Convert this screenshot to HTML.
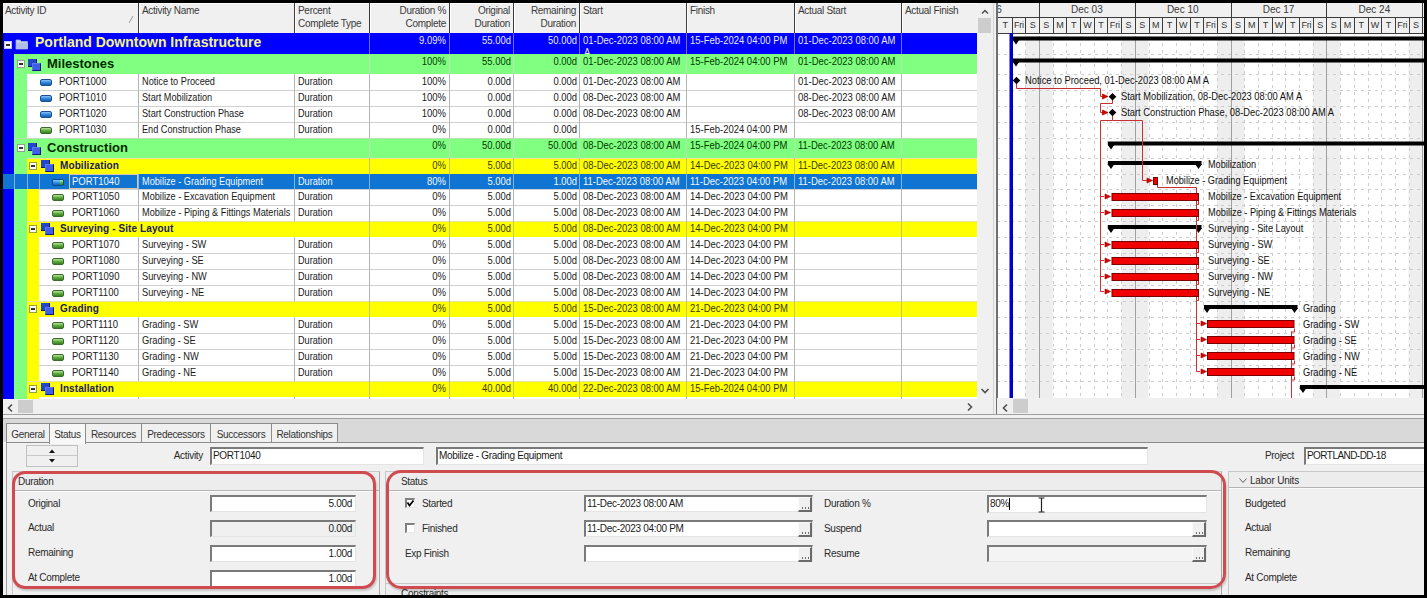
<!DOCTYPE html>
<html><head><meta charset="utf-8"><title>P6</title>
<style>
html,body{margin:0;padding:0;}
body{width:1427px;height:598px;overflow:hidden;position:relative;background:#000;font-family:"Liberation Sans",sans-serif;}
.a{position:absolute;}
.t{position:absolute;white-space:nowrap;}
svg{display:block;}
</style></head><body>
<div class="a" style="left:0;top:0;width:1427px;height:598px;overflow:hidden">
<div class="a" style="left:3px;top:3px;width:974px;height:30px;background:#f0f0f0;"></div>
<div class="a" style="left:3px;top:3px;width:974px;height:1px;background:#ffffff;"></div>
<div class="a" style="left:138px;top:3px;width:1px;height:30px;background:#3c3c3c;"></div>
<div class="a" style="left:139px;top:3px;width:1px;height:30px;background:#ffffff;"></div>
<div class="a" style="left:294px;top:3px;width:1px;height:30px;background:#3c3c3c;"></div>
<div class="a" style="left:295px;top:3px;width:1px;height:30px;background:#ffffff;"></div>
<div class="a" style="left:369px;top:3px;width:1px;height:30px;background:#3c3c3c;"></div>
<div class="a" style="left:370px;top:3px;width:1px;height:30px;background:#ffffff;"></div>
<div class="a" style="left:449px;top:3px;width:1px;height:30px;background:#3c3c3c;"></div>
<div class="a" style="left:450px;top:3px;width:1px;height:30px;background:#ffffff;"></div>
<div class="a" style="left:513px;top:3px;width:1px;height:30px;background:#3c3c3c;"></div>
<div class="a" style="left:514px;top:3px;width:1px;height:30px;background:#ffffff;"></div>
<div class="a" style="left:579px;top:3px;width:1px;height:30px;background:#3c3c3c;"></div>
<div class="a" style="left:580px;top:3px;width:1px;height:30px;background:#ffffff;"></div>
<div class="a" style="left:686px;top:3px;width:1px;height:30px;background:#3c3c3c;"></div>
<div class="a" style="left:687px;top:3px;width:1px;height:30px;background:#ffffff;"></div>
<div class="a" style="left:794px;top:3px;width:1px;height:30px;background:#3c3c3c;"></div>
<div class="a" style="left:795px;top:3px;width:1px;height:30px;background:#ffffff;"></div>
<div class="a" style="left:901px;top:3px;width:1px;height:30px;background:#3c3c3c;"></div>
<div class="a" style="left:902px;top:3px;width:1px;height:30px;background:#ffffff;"></div>
<div class="t" style="left:5px;top:4.54px;font-size:10px;line-height:12px;font-weight:400;color:#3a3a3a;letter-spacing:-0.3px;">Activity ID</div>
<div class="t" style="left:142px;top:4.54px;font-size:10px;line-height:12px;font-weight:400;color:#3a3a3a;letter-spacing:-0.3px;">Activity Name</div>
<div class="t" style="left:298px;top:4.54px;font-size:10px;line-height:12px;font-weight:400;color:#3a3a3a;letter-spacing:-0.3px;">Percent</div>
<div class="t" style="left:298px;top:17.54px;font-size:10px;line-height:12px;font-weight:400;color:#3a3a3a;letter-spacing:-0.3px;">Complete Type</div>
<div class="t" style="left:46px;width:400px;text-align:right;top:4.54px;font-size:10px;line-height:12px;font-weight:400;color:#3a3a3a;letter-spacing:-0.3px;">Duration %</div>
<div class="t" style="left:46px;width:400px;text-align:right;top:17.54px;font-size:10px;line-height:12px;font-weight:400;color:#3a3a3a;letter-spacing:-0.3px;">Complete</div>
<div class="t" style="left:110px;width:400px;text-align:right;top:4.54px;font-size:10px;line-height:12px;font-weight:400;color:#3a3a3a;letter-spacing:-0.3px;">Original</div>
<div class="t" style="left:110px;width:400px;text-align:right;top:17.54px;font-size:10px;line-height:12px;font-weight:400;color:#3a3a3a;letter-spacing:-0.3px;">Duration</div>
<div class="t" style="left:176px;width:400px;text-align:right;top:4.54px;font-size:10px;line-height:12px;font-weight:400;color:#3a3a3a;letter-spacing:-0.3px;">Remaining</div>
<div class="t" style="left:176px;width:400px;text-align:right;top:17.54px;font-size:10px;line-height:12px;font-weight:400;color:#3a3a3a;letter-spacing:-0.3px;">Duration</div>
<div class="t" style="left:583px;top:4.54px;font-size:10px;line-height:12px;font-weight:400;color:#3a3a3a;letter-spacing:-0.3px;">Start</div>
<div class="t" style="left:690px;top:4.54px;font-size:10px;line-height:12px;font-weight:400;color:#3a3a3a;letter-spacing:-0.3px;">Finish</div>
<div class="t" style="left:798px;top:4.54px;font-size:10px;line-height:12px;font-weight:400;color:#3a3a3a;letter-spacing:-0.3px;">Actual Start</div>
<div class="t" style="left:905px;top:4.54px;font-size:10px;line-height:12px;font-weight:400;color:#3a3a3a;letter-spacing:-0.3px;">Actual Finish</div>
<svg class="a" style="left:126px;top:13px" width="10" height="12"><line x1="3" y1="10" x2="7" y2="3" stroke="#9a9a9a" stroke-width="1"/></svg>
<div class="a" style="left:3px;top:33px;width:974px;height:21px;background:#0000ff;"></div>
<div class="a" style="left:369px;top:33px;width:1px;height:21px;background:#6f6fff;"></div>
<div class="a" style="left:449px;top:33px;width:1px;height:21px;background:#6f6fff;"></div>
<div class="a" style="left:513px;top:33px;width:1px;height:21px;background:#6f6fff;"></div>
<div class="a" style="left:579px;top:33px;width:1px;height:21px;background:#6f6fff;"></div>
<div class="a" style="left:686px;top:33px;width:1px;height:21px;background:#6f6fff;"></div>
<div class="a" style="left:794px;top:33px;width:1px;height:21px;background:#6f6fff;"></div>
<div class="a" style="left:901px;top:33px;width:1px;height:21px;background:#6f6fff;"></div>
<div class="a" style="left:4px;top:41px;width:6px;height:6px;background:#fff;border:1px solid #c0c0ff"><div class="a" style="left:1px;top:2px;width:4px;height:2px;background:#333"></div></div>
<svg class="a" style="left:15px;top:38px" width="14" height="12"><path d="M1 2 h4 l1.5 1.5 h6 v7.5 h-11.5 z" fill="#c4d0ee" stroke="#9aaad0" stroke-width="0.8"/><path d="M1 5 h12 v6 h-12z" fill="#b0bee6"/></svg>
<div class="t" style="left:35px;top:34.25px;font-size:14px;line-height:17px;font-weight:700;color:#f4f48a;letter-spacing:0px;">Portland Downtown Infrastructure</div>
<div class="t" style="left:46px;width:400px;text-align:right;top:33.69px;font-size:11px;line-height:13px;font-weight:400;color:#e8e8ff;letter-spacing:0px;transform:scaleX(0.865);transform-origin:100% 0;">9.09%</div>
<div class="t" style="left:111px;width:400px;text-align:right;top:33.69px;font-size:11px;line-height:13px;font-weight:400;color:#e8e8ff;letter-spacing:0px;transform:scaleX(0.8583);transform-origin:100% 0;">55.00d</div>
<div class="t" style="left:177px;width:400px;text-align:right;top:33.69px;font-size:11px;line-height:13px;font-weight:400;color:#e8e8ff;letter-spacing:0px;transform:scaleX(0.8583);transform-origin:100% 0;">50.00d</div>
<div class="t" style="left:583px;top:33.69px;font-size:11px;line-height:13px;font-weight:400;color:#e8e8ff;letter-spacing:0px;transform:scaleX(0.861);transform-origin:0 0;">01-Dec-2023 08:00 AM</div>
<div class="t" style="left:690px;top:33.69px;font-size:11px;line-height:13px;font-weight:400;color:#e8e8ff;letter-spacing:0px;transform:scaleX(0.861);transform-origin:0 0;">15-Feb-2024 04:00 PM</div>
<div class="t" style="left:798px;top:33.69px;font-size:11px;line-height:13px;font-weight:400;color:#e8e8ff;letter-spacing:0px;transform:scaleX(0.861);transform-origin:0 0;">01-Dec-2023 08:00 AM</div>
<div class="t" style="left:584px;top:45.69px;font-size:11px;line-height:13px;font-weight:400;color:#e8e8ff;letter-spacing:0px;transform:scaleX(0.865);transform-origin:0 0;">A</div>
<div class="a" style="left:3px;top:54px;width:11px;height:20px;background:#0000ff;"></div>
<div class="a" style="left:14px;top:54px;width:963px;height:20px;background:#80ff80;"></div>
<div class="a" style="left:369px;top:54px;width:1px;height:20px;background:#b4e4b4;"></div>
<div class="a" style="left:449px;top:54px;width:1px;height:20px;background:#b4e4b4;"></div>
<div class="a" style="left:513px;top:54px;width:1px;height:20px;background:#b4e4b4;"></div>
<div class="a" style="left:579px;top:54px;width:1px;height:20px;background:#b4e4b4;"></div>
<div class="a" style="left:686px;top:54px;width:1px;height:20px;background:#b4e4b4;"></div>
<div class="a" style="left:794px;top:54px;width:1px;height:20px;background:#b4e4b4;"></div>
<div class="a" style="left:901px;top:54px;width:1px;height:20px;background:#b4e4b4;"></div>
<div class="a" style="left:17px;top:60px;width:6px;height:6px;background:#fff;border:1px solid #9a9a9a"><div class="a" style="left:1px;top:2px;width:4px;height:2px;background:#333"></div></div>
<div class="a" style="left:28px;top:59px;width:9px;height:8px;background:#2546c8;border-right:1px solid #0a1a70;border-bottom:1px solid #0a1a70;box-sizing:border-box"></div>
<div class="a" style="left:32px;top:63px;width:9px;height:8px;background:#3f5fe8;border:1px solid #0a1a70;border-top-color:#5a7af0;border-left-color:#5a7af0;box-sizing:border-box"></div>
<div class="t" style="left:47px;top:55.5px;font-size:13px;line-height:16px;font-weight:700;color:#002a00;letter-spacing:0px;">Milestones</div>
<div class="t" style="left:46px;width:400px;text-align:right;top:54.69px;font-size:11px;line-height:13px;font-weight:400;color:#003a00;letter-spacing:0px;transform:scaleX(0.865);transform-origin:100% 0;">100%</div>
<div class="t" style="left:111px;width:400px;text-align:right;top:54.69px;font-size:11px;line-height:13px;font-weight:400;color:#003a00;letter-spacing:0px;transform:scaleX(0.8583);transform-origin:100% 0;">55.00d</div>
<div class="t" style="left:177px;width:400px;text-align:right;top:54.69px;font-size:11px;line-height:13px;font-weight:400;color:#003a00;letter-spacing:0px;transform:scaleX(0.857);transform-origin:100% 0;">0.00d</div>
<div class="t" style="left:583px;top:54.69px;font-size:11px;line-height:13px;font-weight:400;color:#003a00;letter-spacing:0px;transform:scaleX(0.861);transform-origin:0 0;">01-Dec-2023 08:00 AM</div>
<div class="t" style="left:690px;top:54.69px;font-size:11px;line-height:13px;font-weight:400;color:#003a00;letter-spacing:0px;transform:scaleX(0.861);transform-origin:0 0;">15-Feb-2024 04:00 PM</div>
<div class="t" style="left:798px;top:54.69px;font-size:11px;line-height:13px;font-weight:400;color:#003a00;letter-spacing:0px;transform:scaleX(0.861);transform-origin:0 0;">01-Dec-2023 08:00 AM</div>
<div class="a" style="left:3px;top:74px;width:11px;height:16px;background:#0000ff;"></div>
<div class="a" style="left:14px;top:74px;width:13px;height:16px;background:#80ff80;"></div>
<div class="a" style="left:27px;top:74px;width:950px;height:16px;background:#fff;"></div>
<div class="a" style="left:138px;top:74px;width:1px;height:16px;background:#b4b4b4;"></div>
<div class="a" style="left:294px;top:74px;width:1px;height:16px;background:#b4b4b4;"></div>
<div class="a" style="left:369px;top:74px;width:1px;height:16px;background:#b4b4b4;"></div>
<div class="a" style="left:449px;top:74px;width:1px;height:16px;background:#b4b4b4;"></div>
<div class="a" style="left:513px;top:74px;width:1px;height:16px;background:#b4b4b4;"></div>
<div class="a" style="left:579px;top:74px;width:1px;height:16px;background:#b4b4b4;"></div>
<div class="a" style="left:686px;top:74px;width:1px;height:16px;background:#b4b4b4;"></div>
<div class="a" style="left:794px;top:74px;width:1px;height:16px;background:#b4b4b4;"></div>
<div class="a" style="left:901px;top:74px;width:1px;height:16px;background:#b4b4b4;"></div>
<div class="a" style="left:40px;top:79px;width:12px;height:7px;border-radius:2px;background:linear-gradient(#8cc4f4,#2a82d8 55%,#1560b0);border:1px solid #1a4f90;box-sizing:border-box"></div>
<div class="t" style="left:59px;top:74.69px;font-size:11px;line-height:13px;font-weight:400;color:#1a1a1a;letter-spacing:0px;transform:scaleX(0.865);transform-origin:0 0;">PORT1000</div>
<div class="t" style="left:142px;top:74.69px;font-size:11px;line-height:13px;font-weight:400;color:#1a1a1a;letter-spacing:0px;transform:scaleX(0.8344);transform-origin:0 0;">Notice to Proceed</div>
<div class="t" style="left:298px;top:74.69px;font-size:11px;line-height:13px;font-weight:400;color:#1a1a1a;letter-spacing:0px;transform:scaleX(0.83);transform-origin:0 0;">Duration</div>
<div class="t" style="left:46px;width:400px;text-align:right;top:74.69px;font-size:11px;line-height:13px;font-weight:400;color:#1a1a1a;letter-spacing:0px;transform:scaleX(0.865);transform-origin:100% 0;">100%</div>
<div class="t" style="left:111px;width:400px;text-align:right;top:74.69px;font-size:11px;line-height:13px;font-weight:400;color:#1a1a1a;letter-spacing:0px;transform:scaleX(0.857);transform-origin:100% 0;">0.00d</div>
<div class="t" style="left:177px;width:400px;text-align:right;top:74.69px;font-size:11px;line-height:13px;font-weight:400;color:#1a1a1a;letter-spacing:0px;transform:scaleX(0.857);transform-origin:100% 0;">0.00d</div>
<div class="t" style="left:583px;top:74.69px;font-size:11px;line-height:13px;font-weight:400;color:#1a1a1a;letter-spacing:0px;transform:scaleX(0.861);transform-origin:0 0;">01-Dec-2023 08:00 AM</div>
<div class="t" style="left:690px;top:74.69px;font-size:11px;line-height:13px;font-weight:400;color:#1a1a1a;letter-spacing:0px;transform:scaleX(0.86);transform-origin:0 0;"></div>
<div class="t" style="left:798px;top:74.69px;font-size:11px;line-height:13px;font-weight:400;color:#1a1a1a;letter-spacing:0px;transform:scaleX(0.861);transform-origin:0 0;">01-Dec-2023 08:00 AM</div>
<div class="a" style="left:3px;top:90px;width:11px;height:16px;background:#0000ff;"></div>
<div class="a" style="left:14px;top:90px;width:13px;height:16px;background:#80ff80;"></div>
<div class="a" style="left:27px;top:90px;width:950px;height:16px;background:#fff;"></div>
<div class="a" style="left:27px;top:90px;width:950px;height:1px;background:#d0d0d0;"></div>
<div class="a" style="left:138px;top:90px;width:1px;height:16px;background:#b4b4b4;"></div>
<div class="a" style="left:294px;top:90px;width:1px;height:16px;background:#b4b4b4;"></div>
<div class="a" style="left:369px;top:90px;width:1px;height:16px;background:#b4b4b4;"></div>
<div class="a" style="left:449px;top:90px;width:1px;height:16px;background:#b4b4b4;"></div>
<div class="a" style="left:513px;top:90px;width:1px;height:16px;background:#b4b4b4;"></div>
<div class="a" style="left:579px;top:90px;width:1px;height:16px;background:#b4b4b4;"></div>
<div class="a" style="left:686px;top:90px;width:1px;height:16px;background:#b4b4b4;"></div>
<div class="a" style="left:794px;top:90px;width:1px;height:16px;background:#b4b4b4;"></div>
<div class="a" style="left:901px;top:90px;width:1px;height:16px;background:#b4b4b4;"></div>
<div class="a" style="left:40px;top:95px;width:12px;height:7px;border-radius:2px;background:linear-gradient(#8cc4f4,#2a82d8 55%,#1560b0);border:1px solid #1a4f90;box-sizing:border-box"></div>
<div class="t" style="left:59px;top:90.69px;font-size:11px;line-height:13px;font-weight:400;color:#1a1a1a;letter-spacing:0px;transform:scaleX(0.865);transform-origin:0 0;">PORT1010</div>
<div class="t" style="left:142px;top:90.69px;font-size:11px;line-height:13px;font-weight:400;color:#1a1a1a;letter-spacing:0px;transform:scaleX(0.8317);transform-origin:0 0;">Start Mobilization</div>
<div class="t" style="left:298px;top:90.69px;font-size:11px;line-height:13px;font-weight:400;color:#1a1a1a;letter-spacing:0px;transform:scaleX(0.83);transform-origin:0 0;">Duration</div>
<div class="t" style="left:46px;width:400px;text-align:right;top:90.69px;font-size:11px;line-height:13px;font-weight:400;color:#1a1a1a;letter-spacing:0px;transform:scaleX(0.865);transform-origin:100% 0;">100%</div>
<div class="t" style="left:111px;width:400px;text-align:right;top:90.69px;font-size:11px;line-height:13px;font-weight:400;color:#1a1a1a;letter-spacing:0px;transform:scaleX(0.857);transform-origin:100% 0;">0.00d</div>
<div class="t" style="left:177px;width:400px;text-align:right;top:90.69px;font-size:11px;line-height:13px;font-weight:400;color:#1a1a1a;letter-spacing:0px;transform:scaleX(0.857);transform-origin:100% 0;">0.00d</div>
<div class="t" style="left:583px;top:90.69px;font-size:11px;line-height:13px;font-weight:400;color:#1a1a1a;letter-spacing:0px;transform:scaleX(0.861);transform-origin:0 0;">08-Dec-2023 08:00 AM</div>
<div class="t" style="left:690px;top:90.69px;font-size:11px;line-height:13px;font-weight:400;color:#1a1a1a;letter-spacing:0px;transform:scaleX(0.86);transform-origin:0 0;"></div>
<div class="t" style="left:798px;top:90.69px;font-size:11px;line-height:13px;font-weight:400;color:#1a1a1a;letter-spacing:0px;transform:scaleX(0.861);transform-origin:0 0;">08-Dec-2023 08:00 AM</div>
<div class="a" style="left:3px;top:106px;width:11px;height:16px;background:#0000ff;"></div>
<div class="a" style="left:14px;top:106px;width:13px;height:16px;background:#80ff80;"></div>
<div class="a" style="left:27px;top:106px;width:950px;height:16px;background:#fff;"></div>
<div class="a" style="left:27px;top:106px;width:950px;height:1px;background:#d0d0d0;"></div>
<div class="a" style="left:138px;top:106px;width:1px;height:16px;background:#b4b4b4;"></div>
<div class="a" style="left:294px;top:106px;width:1px;height:16px;background:#b4b4b4;"></div>
<div class="a" style="left:369px;top:106px;width:1px;height:16px;background:#b4b4b4;"></div>
<div class="a" style="left:449px;top:106px;width:1px;height:16px;background:#b4b4b4;"></div>
<div class="a" style="left:513px;top:106px;width:1px;height:16px;background:#b4b4b4;"></div>
<div class="a" style="left:579px;top:106px;width:1px;height:16px;background:#b4b4b4;"></div>
<div class="a" style="left:686px;top:106px;width:1px;height:16px;background:#b4b4b4;"></div>
<div class="a" style="left:794px;top:106px;width:1px;height:16px;background:#b4b4b4;"></div>
<div class="a" style="left:901px;top:106px;width:1px;height:16px;background:#b4b4b4;"></div>
<div class="a" style="left:40px;top:111px;width:12px;height:7px;border-radius:2px;background:linear-gradient(#8cc4f4,#2a82d8 55%,#1560b0);border:1px solid #1a4f90;box-sizing:border-box"></div>
<div class="t" style="left:59px;top:106.69px;font-size:11px;line-height:13px;font-weight:400;color:#1a1a1a;letter-spacing:0px;transform:scaleX(0.865);transform-origin:0 0;">PORT1020</div>
<div class="t" style="left:142px;top:106.69px;font-size:11px;line-height:13px;font-weight:400;color:#1a1a1a;letter-spacing:0px;transform:scaleX(0.8333);transform-origin:0 0;">Start Construction Phase</div>
<div class="t" style="left:298px;top:106.69px;font-size:11px;line-height:13px;font-weight:400;color:#1a1a1a;letter-spacing:0px;transform:scaleX(0.83);transform-origin:0 0;">Duration</div>
<div class="t" style="left:46px;width:400px;text-align:right;top:106.69px;font-size:11px;line-height:13px;font-weight:400;color:#1a1a1a;letter-spacing:0px;transform:scaleX(0.865);transform-origin:100% 0;">100%</div>
<div class="t" style="left:111px;width:400px;text-align:right;top:106.69px;font-size:11px;line-height:13px;font-weight:400;color:#1a1a1a;letter-spacing:0px;transform:scaleX(0.857);transform-origin:100% 0;">0.00d</div>
<div class="t" style="left:177px;width:400px;text-align:right;top:106.69px;font-size:11px;line-height:13px;font-weight:400;color:#1a1a1a;letter-spacing:0px;transform:scaleX(0.857);transform-origin:100% 0;">0.00d</div>
<div class="t" style="left:583px;top:106.69px;font-size:11px;line-height:13px;font-weight:400;color:#1a1a1a;letter-spacing:0px;transform:scaleX(0.861);transform-origin:0 0;">08-Dec-2023 08:00 AM</div>
<div class="t" style="left:690px;top:106.69px;font-size:11px;line-height:13px;font-weight:400;color:#1a1a1a;letter-spacing:0px;transform:scaleX(0.86);transform-origin:0 0;"></div>
<div class="t" style="left:798px;top:106.69px;font-size:11px;line-height:13px;font-weight:400;color:#1a1a1a;letter-spacing:0px;transform:scaleX(0.861);transform-origin:0 0;">08-Dec-2023 08:00 AM</div>
<div class="a" style="left:3px;top:122px;width:11px;height:16px;background:#0000ff;"></div>
<div class="a" style="left:14px;top:122px;width:13px;height:16px;background:#80ff80;"></div>
<div class="a" style="left:27px;top:122px;width:950px;height:16px;background:#fff;"></div>
<div class="a" style="left:27px;top:122px;width:950px;height:1px;background:#d0d0d0;"></div>
<div class="a" style="left:138px;top:122px;width:1px;height:16px;background:#b4b4b4;"></div>
<div class="a" style="left:294px;top:122px;width:1px;height:16px;background:#b4b4b4;"></div>
<div class="a" style="left:369px;top:122px;width:1px;height:16px;background:#b4b4b4;"></div>
<div class="a" style="left:449px;top:122px;width:1px;height:16px;background:#b4b4b4;"></div>
<div class="a" style="left:513px;top:122px;width:1px;height:16px;background:#b4b4b4;"></div>
<div class="a" style="left:579px;top:122px;width:1px;height:16px;background:#b4b4b4;"></div>
<div class="a" style="left:686px;top:122px;width:1px;height:16px;background:#b4b4b4;"></div>
<div class="a" style="left:794px;top:122px;width:1px;height:16px;background:#b4b4b4;"></div>
<div class="a" style="left:901px;top:122px;width:1px;height:16px;background:#b4b4b4;"></div>
<div class="a" style="left:40px;top:127px;width:12px;height:7px;border-radius:2px;background:linear-gradient(#b8e0a0,#5aa83a 55%,#3a8020);border:1px solid #3a6a2a;box-sizing:border-box"></div>
<div class="t" style="left:59px;top:122.69px;font-size:11px;line-height:13px;font-weight:400;color:#1a1a1a;letter-spacing:0px;transform:scaleX(0.865);transform-origin:0 0;">PORT1030</div>
<div class="t" style="left:142px;top:122.69px;font-size:11px;line-height:13px;font-weight:400;color:#1a1a1a;letter-spacing:0px;transform:scaleX(0.8341);transform-origin:0 0;">End Construction Phase</div>
<div class="t" style="left:298px;top:122.69px;font-size:11px;line-height:13px;font-weight:400;color:#1a1a1a;letter-spacing:0px;transform:scaleX(0.83);transform-origin:0 0;">Duration</div>
<div class="t" style="left:46px;width:400px;text-align:right;top:122.69px;font-size:11px;line-height:13px;font-weight:400;color:#1a1a1a;letter-spacing:0px;transform:scaleX(0.865);transform-origin:100% 0;">0%</div>
<div class="t" style="left:111px;width:400px;text-align:right;top:122.69px;font-size:11px;line-height:13px;font-weight:400;color:#1a1a1a;letter-spacing:0px;transform:scaleX(0.857);transform-origin:100% 0;">0.00d</div>
<div class="t" style="left:177px;width:400px;text-align:right;top:122.69px;font-size:11px;line-height:13px;font-weight:400;color:#1a1a1a;letter-spacing:0px;transform:scaleX(0.857);transform-origin:100% 0;">0.00d</div>
<div class="t" style="left:583px;top:122.69px;font-size:11px;line-height:13px;font-weight:400;color:#1a1a1a;letter-spacing:0px;transform:scaleX(0.86);transform-origin:0 0;"></div>
<div class="t" style="left:690px;top:122.69px;font-size:11px;line-height:13px;font-weight:400;color:#1a1a1a;letter-spacing:0px;transform:scaleX(0.861);transform-origin:0 0;">15-Feb-2024 04:00 PM</div>
<div class="t" style="left:798px;top:122.69px;font-size:11px;line-height:13px;font-weight:400;color:#1a1a1a;letter-spacing:0px;transform:scaleX(0.86);transform-origin:0 0;"></div>
<div class="a" style="left:3px;top:138px;width:11px;height:20px;background:#0000ff;"></div>
<div class="a" style="left:14px;top:138px;width:963px;height:20px;background:#80ff80;"></div>
<div class="a" style="left:14px;top:138px;width:963px;height:1px;background:#bce0bc;"></div>
<div class="a" style="left:369px;top:138px;width:1px;height:20px;background:#b4e4b4;"></div>
<div class="a" style="left:449px;top:138px;width:1px;height:20px;background:#b4e4b4;"></div>
<div class="a" style="left:513px;top:138px;width:1px;height:20px;background:#b4e4b4;"></div>
<div class="a" style="left:579px;top:138px;width:1px;height:20px;background:#b4e4b4;"></div>
<div class="a" style="left:686px;top:138px;width:1px;height:20px;background:#b4e4b4;"></div>
<div class="a" style="left:794px;top:138px;width:1px;height:20px;background:#b4e4b4;"></div>
<div class="a" style="left:901px;top:138px;width:1px;height:20px;background:#b4e4b4;"></div>
<div class="a" style="left:17px;top:144px;width:6px;height:6px;background:#fff;border:1px solid #9a9a9a"><div class="a" style="left:1px;top:2px;width:4px;height:2px;background:#333"></div></div>
<div class="a" style="left:28px;top:143px;width:9px;height:8px;background:#2546c8;border-right:1px solid #0a1a70;border-bottom:1px solid #0a1a70;box-sizing:border-box"></div>
<div class="a" style="left:32px;top:147px;width:9px;height:8px;background:#3f5fe8;border:1px solid #0a1a70;border-top-color:#5a7af0;border-left-color:#5a7af0;box-sizing:border-box"></div>
<div class="t" style="left:47px;top:139.5px;font-size:13px;line-height:16px;font-weight:700;color:#002a00;letter-spacing:0px;">Construction</div>
<div class="t" style="left:46px;width:400px;text-align:right;top:138.69px;font-size:11px;line-height:13px;font-weight:400;color:#003a00;letter-spacing:0px;transform:scaleX(0.865);transform-origin:100% 0;">0%</div>
<div class="t" style="left:111px;width:400px;text-align:right;top:138.69px;font-size:11px;line-height:13px;font-weight:400;color:#003a00;letter-spacing:0px;transform:scaleX(0.8583);transform-origin:100% 0;">50.00d</div>
<div class="t" style="left:177px;width:400px;text-align:right;top:138.69px;font-size:11px;line-height:13px;font-weight:400;color:#003a00;letter-spacing:0px;transform:scaleX(0.8583);transform-origin:100% 0;">50.00d</div>
<div class="t" style="left:583px;top:138.69px;font-size:11px;line-height:13px;font-weight:400;color:#003a00;letter-spacing:0px;transform:scaleX(0.861);transform-origin:0 0;">08-Dec-2023 08:00 AM</div>
<div class="t" style="left:690px;top:138.69px;font-size:11px;line-height:13px;font-weight:400;color:#003a00;letter-spacing:0px;transform:scaleX(0.861);transform-origin:0 0;">15-Feb-2024 04:00 PM</div>
<div class="t" style="left:798px;top:138.69px;font-size:11px;line-height:13px;font-weight:400;color:#003a00;letter-spacing:0px;transform:scaleX(0.861);transform-origin:0 0;">11-Dec-2023 08:00 AM</div>
<div class="a" style="left:3px;top:158px;width:11px;height:16px;background:#0000ff;"></div>
<div class="a" style="left:14px;top:158px;width:13px;height:16px;background:#80ff80;"></div>
<div class="a" style="left:27px;top:158px;width:950px;height:16px;background:#ffff00;"></div>
<div class="a" style="left:27px;top:158px;width:950px;height:1px;background:#e4e4a0;"></div>
<div class="a" style="left:369px;top:158px;width:1px;height:16px;background:#c8c860;"></div>
<div class="a" style="left:449px;top:158px;width:1px;height:16px;background:#c8c860;"></div>
<div class="a" style="left:513px;top:158px;width:1px;height:16px;background:#c8c860;"></div>
<div class="a" style="left:579px;top:158px;width:1px;height:16px;background:#c8c860;"></div>
<div class="a" style="left:686px;top:158px;width:1px;height:16px;background:#c8c860;"></div>
<div class="a" style="left:794px;top:158px;width:1px;height:16px;background:#c8c860;"></div>
<div class="a" style="left:901px;top:158px;width:1px;height:16px;background:#c8c860;"></div>
<div class="a" style="left:29px;top:162px;width:6px;height:6px;background:#fff;border:1px solid #a0a040"><div class="a" style="left:1px;top:2px;width:4px;height:2px;background:#333"></div></div>
<div class="a" style="left:41px;top:160px;width:9px;height:8px;background:#2546c8;border-right:1px solid #0a1a70;border-bottom:1px solid #0a1a70;box-sizing:border-box"></div>
<div class="a" style="left:45px;top:164px;width:9px;height:8px;background:#3f5fe8;border:1px solid #0a1a70;border-top-color:#5a7af0;border-left-color:#5a7af0;box-sizing:border-box"></div>
<div class="t" style="left:60px;top:160.23px;font-size:10px;line-height:12px;font-weight:700;color:#20205a;letter-spacing:0.1px;">Mobilization</div>
<div class="t" style="left:46px;width:400px;text-align:right;top:158.69px;font-size:11px;line-height:13px;font-weight:400;color:#3a3a00;letter-spacing:0px;transform:scaleX(0.865);transform-origin:100% 0;">0%</div>
<div class="t" style="left:111px;width:400px;text-align:right;top:158.69px;font-size:11px;line-height:13px;font-weight:400;color:#3a3a00;letter-spacing:0px;transform:scaleX(0.857);transform-origin:100% 0;">5.00d</div>
<div class="t" style="left:177px;width:400px;text-align:right;top:158.69px;font-size:11px;line-height:13px;font-weight:400;color:#3a3a00;letter-spacing:0px;transform:scaleX(0.857);transform-origin:100% 0;">5.00d</div>
<div class="t" style="left:583px;top:158.69px;font-size:11px;line-height:13px;font-weight:400;color:#3a3a00;letter-spacing:0px;transform:scaleX(0.861);transform-origin:0 0;">08-Dec-2023 08:00 AM</div>
<div class="t" style="left:690px;top:158.69px;font-size:11px;line-height:13px;font-weight:400;color:#3a3a00;letter-spacing:0px;transform:scaleX(0.861);transform-origin:0 0;">14-Dec-2023 04:00 PM</div>
<div class="t" style="left:798px;top:158.69px;font-size:11px;line-height:13px;font-weight:400;color:#3a3a00;letter-spacing:0px;transform:scaleX(0.861);transform-origin:0 0;">11-Dec-2023 08:00 AM</div>
<div class="a" style="left:3px;top:174px;width:974px;height:15px;background:#0f74d2;"></div>
<div class="a" style="left:14px;top:174px;width:1px;height:15px;background:#7ab6ec;"></div>
<div class="a" style="left:27px;top:174px;width:1px;height:15px;background:#7ab6ec;"></div>
<div class="a" style="left:39px;top:174px;width:1px;height:15px;background:#7ab6ec;"></div>
<div class="a" style="left:69px;top:174px;width:1px;height:15px;background:#7ab6ec;"></div>
<div class="a" style="left:138px;top:174px;width:1px;height:15px;background:#7ab6ec;"></div>
<div class="a" style="left:294px;top:174px;width:1px;height:15px;background:#7ab6ec;"></div>
<div class="a" style="left:369px;top:174px;width:1px;height:15px;background:#7ab6ec;"></div>
<div class="a" style="left:449px;top:174px;width:1px;height:15px;background:#7ab6ec;"></div>
<div class="a" style="left:513px;top:174px;width:1px;height:15px;background:#7ab6ec;"></div>
<div class="a" style="left:579px;top:174px;width:1px;height:15px;background:#7ab6ec;"></div>
<div class="a" style="left:686px;top:174px;width:1px;height:15px;background:#7ab6ec;"></div>
<div class="a" style="left:794px;top:174px;width:1px;height:15px;background:#7ab6ec;"></div>
<div class="a" style="left:901px;top:174px;width:1px;height:15px;background:#7ab6ec;"></div>
<div class="a" style="left:69px;top:174px;width:69px;height:15px;box-sizing:border-box;border:1px solid #d8c8b0"></div>
<div class="a" style="left:52px;top:179px;width:12px;height:7px;border-radius:2px;background:linear-gradient(#0a4a8a,#0a4a8a);box-sizing:border-box;overflow:hidden"><div class="a" style="left:1px;top:1px;width:7px;height:5px;background:linear-gradient(#7cc8ff,#2a88e0 60%,#1a5cb0)"></div><div class="a" style="left:8px;top:1px;width:3px;height:5px;background:linear-gradient(#a8f0a0,#50b040 60%,#2a7a20)"></div></div>
<div class="t" style="left:72px;top:174.69px;font-size:11px;line-height:13px;font-weight:400;color:#f0f8ff;letter-spacing:0px;transform:scaleX(0.865);transform-origin:0 0;">PORT1040</div>
<div class="t" style="left:142px;top:174.69px;font-size:11px;line-height:13px;font-weight:400;color:#f0f8ff;letter-spacing:0px;transform:scaleX(0.835);transform-origin:0 0;">Mobilize - Grading Equipment</div>
<div class="t" style="left:298px;top:174.69px;font-size:11px;line-height:13px;font-weight:400;color:#f0f8ff;letter-spacing:0px;transform:scaleX(0.83);transform-origin:0 0;">Duration</div>
<div class="t" style="left:46px;width:400px;text-align:right;top:174.69px;font-size:11px;line-height:13px;font-weight:400;color:#f0f8ff;letter-spacing:0px;transform:scaleX(0.865);transform-origin:100% 0;">80%</div>
<div class="t" style="left:111px;width:400px;text-align:right;top:174.69px;font-size:11px;line-height:13px;font-weight:400;color:#f0f8ff;letter-spacing:0px;transform:scaleX(0.857);transform-origin:100% 0;">5.00d</div>
<div class="t" style="left:177px;width:400px;text-align:right;top:174.69px;font-size:11px;line-height:13px;font-weight:400;color:#f0f8ff;letter-spacing:0px;transform:scaleX(0.857);transform-origin:100% 0;">1.00d</div>
<div class="t" style="left:583px;top:174.69px;font-size:11px;line-height:13px;font-weight:400;color:#f0f8ff;letter-spacing:0px;transform:scaleX(0.861);transform-origin:0 0;">11-Dec-2023 08:00 AM</div>
<div class="t" style="left:690px;top:174.69px;font-size:11px;line-height:13px;font-weight:400;color:#f0f8ff;letter-spacing:0px;transform:scaleX(0.861);transform-origin:0 0;">11-Dec-2023 04:00 PM</div>
<div class="t" style="left:798px;top:174.69px;font-size:11px;line-height:13px;font-weight:400;color:#f0f8ff;letter-spacing:0px;transform:scaleX(0.861);transform-origin:0 0;">11-Dec-2023 08:00 AM</div>
<div class="a" style="left:3px;top:189px;width:11px;height:16px;background:#0000ff;"></div>
<div class="a" style="left:14px;top:189px;width:13px;height:16px;background:#80ff80;"></div>
<div class="a" style="left:27px;top:189px;width:12px;height:16px;background:#ffff00;"></div>
<div class="a" style="left:39px;top:189px;width:938px;height:16px;background:#fff;"></div>
<div class="a" style="left:39px;top:189px;width:938px;height:1px;background:#d0d0d0;"></div>
<div class="a" style="left:138px;top:189px;width:1px;height:16px;background:#b4b4b4;"></div>
<div class="a" style="left:294px;top:189px;width:1px;height:16px;background:#b4b4b4;"></div>
<div class="a" style="left:369px;top:189px;width:1px;height:16px;background:#b4b4b4;"></div>
<div class="a" style="left:449px;top:189px;width:1px;height:16px;background:#b4b4b4;"></div>
<div class="a" style="left:513px;top:189px;width:1px;height:16px;background:#b4b4b4;"></div>
<div class="a" style="left:579px;top:189px;width:1px;height:16px;background:#b4b4b4;"></div>
<div class="a" style="left:686px;top:189px;width:1px;height:16px;background:#b4b4b4;"></div>
<div class="a" style="left:794px;top:189px;width:1px;height:16px;background:#b4b4b4;"></div>
<div class="a" style="left:901px;top:189px;width:1px;height:16px;background:#b4b4b4;"></div>
<div class="a" style="left:52px;top:194px;width:12px;height:7px;border-radius:2px;background:linear-gradient(#b8e0a0,#5aa83a 55%,#3a8020);border:1px solid #3a6a2a;box-sizing:border-box"></div>
<div class="t" style="left:72px;top:189.69px;font-size:11px;line-height:13px;font-weight:400;color:#1a1a1a;letter-spacing:0px;transform:scaleX(0.865);transform-origin:0 0;">PORT1050</div>
<div class="t" style="left:142px;top:189.69px;font-size:11px;line-height:13px;font-weight:400;color:#1a1a1a;letter-spacing:0px;transform:scaleX(0.834);transform-origin:0 0;">Mobilize - Excavation Equipment</div>
<div class="t" style="left:298px;top:189.69px;font-size:11px;line-height:13px;font-weight:400;color:#1a1a1a;letter-spacing:0px;transform:scaleX(0.83);transform-origin:0 0;">Duration</div>
<div class="t" style="left:46px;width:400px;text-align:right;top:189.69px;font-size:11px;line-height:13px;font-weight:400;color:#1a1a1a;letter-spacing:0px;transform:scaleX(0.865);transform-origin:100% 0;">0%</div>
<div class="t" style="left:111px;width:400px;text-align:right;top:189.69px;font-size:11px;line-height:13px;font-weight:400;color:#1a1a1a;letter-spacing:0px;transform:scaleX(0.857);transform-origin:100% 0;">5.00d</div>
<div class="t" style="left:177px;width:400px;text-align:right;top:189.69px;font-size:11px;line-height:13px;font-weight:400;color:#1a1a1a;letter-spacing:0px;transform:scaleX(0.857);transform-origin:100% 0;">5.00d</div>
<div class="t" style="left:583px;top:189.69px;font-size:11px;line-height:13px;font-weight:400;color:#1a1a1a;letter-spacing:0px;transform:scaleX(0.861);transform-origin:0 0;">08-Dec-2023 08:00 AM</div>
<div class="t" style="left:690px;top:189.69px;font-size:11px;line-height:13px;font-weight:400;color:#1a1a1a;letter-spacing:0px;transform:scaleX(0.861);transform-origin:0 0;">14-Dec-2023 04:00 PM</div>
<div class="t" style="left:798px;top:189.69px;font-size:11px;line-height:13px;font-weight:400;color:#1a1a1a;letter-spacing:0px;transform:scaleX(0.86);transform-origin:0 0;"></div>
<div class="a" style="left:3px;top:205px;width:11px;height:16px;background:#0000ff;"></div>
<div class="a" style="left:14px;top:205px;width:13px;height:16px;background:#80ff80;"></div>
<div class="a" style="left:27px;top:205px;width:12px;height:16px;background:#ffff00;"></div>
<div class="a" style="left:39px;top:205px;width:938px;height:16px;background:#fff;"></div>
<div class="a" style="left:39px;top:205px;width:938px;height:1px;background:#d0d0d0;"></div>
<div class="a" style="left:138px;top:205px;width:1px;height:16px;background:#b4b4b4;"></div>
<div class="a" style="left:294px;top:205px;width:1px;height:16px;background:#b4b4b4;"></div>
<div class="a" style="left:369px;top:205px;width:1px;height:16px;background:#b4b4b4;"></div>
<div class="a" style="left:449px;top:205px;width:1px;height:16px;background:#b4b4b4;"></div>
<div class="a" style="left:513px;top:205px;width:1px;height:16px;background:#b4b4b4;"></div>
<div class="a" style="left:579px;top:205px;width:1px;height:16px;background:#b4b4b4;"></div>
<div class="a" style="left:686px;top:205px;width:1px;height:16px;background:#b4b4b4;"></div>
<div class="a" style="left:794px;top:205px;width:1px;height:16px;background:#b4b4b4;"></div>
<div class="a" style="left:901px;top:205px;width:1px;height:16px;background:#b4b4b4;"></div>
<div class="a" style="left:52px;top:210px;width:12px;height:7px;border-radius:2px;background:linear-gradient(#b8e0a0,#5aa83a 55%,#3a8020);border:1px solid #3a6a2a;box-sizing:border-box"></div>
<div class="t" style="left:72px;top:205.69px;font-size:11px;line-height:13px;font-weight:400;color:#1a1a1a;letter-spacing:0px;transform:scaleX(0.865);transform-origin:0 0;">PORT1060</div>
<div class="t" style="left:142px;top:205.69px;font-size:11px;line-height:13px;font-weight:400;color:#1a1a1a;letter-spacing:0px;transform:scaleX(0.8366);transform-origin:0 0;">Mobilize - Piping &amp; Fittings Materials</div>
<div class="t" style="left:298px;top:205.69px;font-size:11px;line-height:13px;font-weight:400;color:#1a1a1a;letter-spacing:0px;transform:scaleX(0.83);transform-origin:0 0;">Duration</div>
<div class="t" style="left:46px;width:400px;text-align:right;top:205.69px;font-size:11px;line-height:13px;font-weight:400;color:#1a1a1a;letter-spacing:0px;transform:scaleX(0.865);transform-origin:100% 0;">0%</div>
<div class="t" style="left:111px;width:400px;text-align:right;top:205.69px;font-size:11px;line-height:13px;font-weight:400;color:#1a1a1a;letter-spacing:0px;transform:scaleX(0.857);transform-origin:100% 0;">5.00d</div>
<div class="t" style="left:177px;width:400px;text-align:right;top:205.69px;font-size:11px;line-height:13px;font-weight:400;color:#1a1a1a;letter-spacing:0px;transform:scaleX(0.857);transform-origin:100% 0;">5.00d</div>
<div class="t" style="left:583px;top:205.69px;font-size:11px;line-height:13px;font-weight:400;color:#1a1a1a;letter-spacing:0px;transform:scaleX(0.861);transform-origin:0 0;">08-Dec-2023 08:00 AM</div>
<div class="t" style="left:690px;top:205.69px;font-size:11px;line-height:13px;font-weight:400;color:#1a1a1a;letter-spacing:0px;transform:scaleX(0.861);transform-origin:0 0;">14-Dec-2023 04:00 PM</div>
<div class="t" style="left:798px;top:205.69px;font-size:11px;line-height:13px;font-weight:400;color:#1a1a1a;letter-spacing:0px;transform:scaleX(0.86);transform-origin:0 0;"></div>
<div class="a" style="left:3px;top:221px;width:11px;height:16px;background:#0000ff;"></div>
<div class="a" style="left:14px;top:221px;width:13px;height:16px;background:#80ff80;"></div>
<div class="a" style="left:27px;top:221px;width:950px;height:16px;background:#ffff00;"></div>
<div class="a" style="left:27px;top:221px;width:950px;height:1px;background:#e4e4a0;"></div>
<div class="a" style="left:369px;top:221px;width:1px;height:16px;background:#c8c860;"></div>
<div class="a" style="left:449px;top:221px;width:1px;height:16px;background:#c8c860;"></div>
<div class="a" style="left:513px;top:221px;width:1px;height:16px;background:#c8c860;"></div>
<div class="a" style="left:579px;top:221px;width:1px;height:16px;background:#c8c860;"></div>
<div class="a" style="left:686px;top:221px;width:1px;height:16px;background:#c8c860;"></div>
<div class="a" style="left:794px;top:221px;width:1px;height:16px;background:#c8c860;"></div>
<div class="a" style="left:901px;top:221px;width:1px;height:16px;background:#c8c860;"></div>
<div class="a" style="left:29px;top:225px;width:6px;height:6px;background:#fff;border:1px solid #a0a040"><div class="a" style="left:1px;top:2px;width:4px;height:2px;background:#333"></div></div>
<div class="a" style="left:41px;top:223px;width:9px;height:8px;background:#2546c8;border-right:1px solid #0a1a70;border-bottom:1px solid #0a1a70;box-sizing:border-box"></div>
<div class="a" style="left:45px;top:227px;width:9px;height:8px;background:#3f5fe8;border:1px solid #0a1a70;border-top-color:#5a7af0;border-left-color:#5a7af0;box-sizing:border-box"></div>
<div class="t" style="left:60px;top:223.23px;font-size:10px;line-height:12px;font-weight:700;color:#20205a;letter-spacing:0.1px;">Surveying - Site Layout</div>
<div class="t" style="left:46px;width:400px;text-align:right;top:221.69px;font-size:11px;line-height:13px;font-weight:400;color:#3a3a00;letter-spacing:0px;transform:scaleX(0.865);transform-origin:100% 0;">0%</div>
<div class="t" style="left:111px;width:400px;text-align:right;top:221.69px;font-size:11px;line-height:13px;font-weight:400;color:#3a3a00;letter-spacing:0px;transform:scaleX(0.857);transform-origin:100% 0;">5.00d</div>
<div class="t" style="left:177px;width:400px;text-align:right;top:221.69px;font-size:11px;line-height:13px;font-weight:400;color:#3a3a00;letter-spacing:0px;transform:scaleX(0.857);transform-origin:100% 0;">5.00d</div>
<div class="t" style="left:583px;top:221.69px;font-size:11px;line-height:13px;font-weight:400;color:#3a3a00;letter-spacing:0px;transform:scaleX(0.861);transform-origin:0 0;">08-Dec-2023 08:00 AM</div>
<div class="t" style="left:690px;top:221.69px;font-size:11px;line-height:13px;font-weight:400;color:#3a3a00;letter-spacing:0px;transform:scaleX(0.861);transform-origin:0 0;">14-Dec-2023 04:00 PM</div>
<div class="t" style="left:798px;top:221.69px;font-size:11px;line-height:13px;font-weight:400;color:#3a3a00;letter-spacing:0px;transform:scaleX(0.86);transform-origin:0 0;"></div>
<div class="a" style="left:3px;top:237px;width:11px;height:16px;background:#0000ff;"></div>
<div class="a" style="left:14px;top:237px;width:13px;height:16px;background:#80ff80;"></div>
<div class="a" style="left:27px;top:237px;width:12px;height:16px;background:#ffff00;"></div>
<div class="a" style="left:39px;top:237px;width:938px;height:16px;background:#fff;"></div>
<div class="a" style="left:138px;top:237px;width:1px;height:16px;background:#b4b4b4;"></div>
<div class="a" style="left:294px;top:237px;width:1px;height:16px;background:#b4b4b4;"></div>
<div class="a" style="left:369px;top:237px;width:1px;height:16px;background:#b4b4b4;"></div>
<div class="a" style="left:449px;top:237px;width:1px;height:16px;background:#b4b4b4;"></div>
<div class="a" style="left:513px;top:237px;width:1px;height:16px;background:#b4b4b4;"></div>
<div class="a" style="left:579px;top:237px;width:1px;height:16px;background:#b4b4b4;"></div>
<div class="a" style="left:686px;top:237px;width:1px;height:16px;background:#b4b4b4;"></div>
<div class="a" style="left:794px;top:237px;width:1px;height:16px;background:#b4b4b4;"></div>
<div class="a" style="left:901px;top:237px;width:1px;height:16px;background:#b4b4b4;"></div>
<div class="a" style="left:52px;top:242px;width:12px;height:7px;border-radius:2px;background:linear-gradient(#b8e0a0,#5aa83a 55%,#3a8020);border:1px solid #3a6a2a;box-sizing:border-box"></div>
<div class="t" style="left:72px;top:237.69px;font-size:11px;line-height:13px;font-weight:400;color:#1a1a1a;letter-spacing:0px;transform:scaleX(0.865);transform-origin:0 0;">PORT1070</div>
<div class="t" style="left:142px;top:237.69px;font-size:11px;line-height:13px;font-weight:400;color:#1a1a1a;letter-spacing:0px;transform:scaleX(0.8421);transform-origin:0 0;">Surveying - SW</div>
<div class="t" style="left:298px;top:237.69px;font-size:11px;line-height:13px;font-weight:400;color:#1a1a1a;letter-spacing:0px;transform:scaleX(0.83);transform-origin:0 0;">Duration</div>
<div class="t" style="left:46px;width:400px;text-align:right;top:237.69px;font-size:11px;line-height:13px;font-weight:400;color:#1a1a1a;letter-spacing:0px;transform:scaleX(0.865);transform-origin:100% 0;">0%</div>
<div class="t" style="left:111px;width:400px;text-align:right;top:237.69px;font-size:11px;line-height:13px;font-weight:400;color:#1a1a1a;letter-spacing:0px;transform:scaleX(0.857);transform-origin:100% 0;">5.00d</div>
<div class="t" style="left:177px;width:400px;text-align:right;top:237.69px;font-size:11px;line-height:13px;font-weight:400;color:#1a1a1a;letter-spacing:0px;transform:scaleX(0.857);transform-origin:100% 0;">5.00d</div>
<div class="t" style="left:583px;top:237.69px;font-size:11px;line-height:13px;font-weight:400;color:#1a1a1a;letter-spacing:0px;transform:scaleX(0.861);transform-origin:0 0;">08-Dec-2023 08:00 AM</div>
<div class="t" style="left:690px;top:237.69px;font-size:11px;line-height:13px;font-weight:400;color:#1a1a1a;letter-spacing:0px;transform:scaleX(0.861);transform-origin:0 0;">14-Dec-2023 04:00 PM</div>
<div class="t" style="left:798px;top:237.69px;font-size:11px;line-height:13px;font-weight:400;color:#1a1a1a;letter-spacing:0px;transform:scaleX(0.86);transform-origin:0 0;"></div>
<div class="a" style="left:3px;top:253px;width:11px;height:16px;background:#0000ff;"></div>
<div class="a" style="left:14px;top:253px;width:13px;height:16px;background:#80ff80;"></div>
<div class="a" style="left:27px;top:253px;width:12px;height:16px;background:#ffff00;"></div>
<div class="a" style="left:39px;top:253px;width:938px;height:16px;background:#fff;"></div>
<div class="a" style="left:39px;top:253px;width:938px;height:1px;background:#d0d0d0;"></div>
<div class="a" style="left:138px;top:253px;width:1px;height:16px;background:#b4b4b4;"></div>
<div class="a" style="left:294px;top:253px;width:1px;height:16px;background:#b4b4b4;"></div>
<div class="a" style="left:369px;top:253px;width:1px;height:16px;background:#b4b4b4;"></div>
<div class="a" style="left:449px;top:253px;width:1px;height:16px;background:#b4b4b4;"></div>
<div class="a" style="left:513px;top:253px;width:1px;height:16px;background:#b4b4b4;"></div>
<div class="a" style="left:579px;top:253px;width:1px;height:16px;background:#b4b4b4;"></div>
<div class="a" style="left:686px;top:253px;width:1px;height:16px;background:#b4b4b4;"></div>
<div class="a" style="left:794px;top:253px;width:1px;height:16px;background:#b4b4b4;"></div>
<div class="a" style="left:901px;top:253px;width:1px;height:16px;background:#b4b4b4;"></div>
<div class="a" style="left:52px;top:258px;width:12px;height:7px;border-radius:2px;background:linear-gradient(#b8e0a0,#5aa83a 55%,#3a8020);border:1px solid #3a6a2a;box-sizing:border-box"></div>
<div class="t" style="left:72px;top:253.69px;font-size:11px;line-height:13px;font-weight:400;color:#1a1a1a;letter-spacing:0px;transform:scaleX(0.865);transform-origin:0 0;">PORT1080</div>
<div class="t" style="left:142px;top:253.69px;font-size:11px;line-height:13px;font-weight:400;color:#1a1a1a;letter-spacing:0px;transform:scaleX(0.8421);transform-origin:0 0;">Surveying - SE</div>
<div class="t" style="left:298px;top:253.69px;font-size:11px;line-height:13px;font-weight:400;color:#1a1a1a;letter-spacing:0px;transform:scaleX(0.83);transform-origin:0 0;">Duration</div>
<div class="t" style="left:46px;width:400px;text-align:right;top:253.69px;font-size:11px;line-height:13px;font-weight:400;color:#1a1a1a;letter-spacing:0px;transform:scaleX(0.865);transform-origin:100% 0;">0%</div>
<div class="t" style="left:111px;width:400px;text-align:right;top:253.69px;font-size:11px;line-height:13px;font-weight:400;color:#1a1a1a;letter-spacing:0px;transform:scaleX(0.857);transform-origin:100% 0;">5.00d</div>
<div class="t" style="left:177px;width:400px;text-align:right;top:253.69px;font-size:11px;line-height:13px;font-weight:400;color:#1a1a1a;letter-spacing:0px;transform:scaleX(0.857);transform-origin:100% 0;">5.00d</div>
<div class="t" style="left:583px;top:253.69px;font-size:11px;line-height:13px;font-weight:400;color:#1a1a1a;letter-spacing:0px;transform:scaleX(0.861);transform-origin:0 0;">08-Dec-2023 08:00 AM</div>
<div class="t" style="left:690px;top:253.69px;font-size:11px;line-height:13px;font-weight:400;color:#1a1a1a;letter-spacing:0px;transform:scaleX(0.861);transform-origin:0 0;">14-Dec-2023 04:00 PM</div>
<div class="t" style="left:798px;top:253.69px;font-size:11px;line-height:13px;font-weight:400;color:#1a1a1a;letter-spacing:0px;transform:scaleX(0.86);transform-origin:0 0;"></div>
<div class="a" style="left:3px;top:269px;width:11px;height:16px;background:#0000ff;"></div>
<div class="a" style="left:14px;top:269px;width:13px;height:16px;background:#80ff80;"></div>
<div class="a" style="left:27px;top:269px;width:12px;height:16px;background:#ffff00;"></div>
<div class="a" style="left:39px;top:269px;width:938px;height:16px;background:#fff;"></div>
<div class="a" style="left:39px;top:269px;width:938px;height:1px;background:#d0d0d0;"></div>
<div class="a" style="left:138px;top:269px;width:1px;height:16px;background:#b4b4b4;"></div>
<div class="a" style="left:294px;top:269px;width:1px;height:16px;background:#b4b4b4;"></div>
<div class="a" style="left:369px;top:269px;width:1px;height:16px;background:#b4b4b4;"></div>
<div class="a" style="left:449px;top:269px;width:1px;height:16px;background:#b4b4b4;"></div>
<div class="a" style="left:513px;top:269px;width:1px;height:16px;background:#b4b4b4;"></div>
<div class="a" style="left:579px;top:269px;width:1px;height:16px;background:#b4b4b4;"></div>
<div class="a" style="left:686px;top:269px;width:1px;height:16px;background:#b4b4b4;"></div>
<div class="a" style="left:794px;top:269px;width:1px;height:16px;background:#b4b4b4;"></div>
<div class="a" style="left:901px;top:269px;width:1px;height:16px;background:#b4b4b4;"></div>
<div class="a" style="left:52px;top:274px;width:12px;height:7px;border-radius:2px;background:linear-gradient(#b8e0a0,#5aa83a 55%,#3a8020);border:1px solid #3a6a2a;box-sizing:border-box"></div>
<div class="t" style="left:72px;top:269.69px;font-size:11px;line-height:13px;font-weight:400;color:#1a1a1a;letter-spacing:0px;transform:scaleX(0.865);transform-origin:0 0;">PORT1090</div>
<div class="t" style="left:142px;top:269.69px;font-size:11px;line-height:13px;font-weight:400;color:#1a1a1a;letter-spacing:0px;transform:scaleX(0.8421);transform-origin:0 0;">Surveying - NW</div>
<div class="t" style="left:298px;top:269.69px;font-size:11px;line-height:13px;font-weight:400;color:#1a1a1a;letter-spacing:0px;transform:scaleX(0.83);transform-origin:0 0;">Duration</div>
<div class="t" style="left:46px;width:400px;text-align:right;top:269.69px;font-size:11px;line-height:13px;font-weight:400;color:#1a1a1a;letter-spacing:0px;transform:scaleX(0.865);transform-origin:100% 0;">0%</div>
<div class="t" style="left:111px;width:400px;text-align:right;top:269.69px;font-size:11px;line-height:13px;font-weight:400;color:#1a1a1a;letter-spacing:0px;transform:scaleX(0.857);transform-origin:100% 0;">5.00d</div>
<div class="t" style="left:177px;width:400px;text-align:right;top:269.69px;font-size:11px;line-height:13px;font-weight:400;color:#1a1a1a;letter-spacing:0px;transform:scaleX(0.857);transform-origin:100% 0;">5.00d</div>
<div class="t" style="left:583px;top:269.69px;font-size:11px;line-height:13px;font-weight:400;color:#1a1a1a;letter-spacing:0px;transform:scaleX(0.861);transform-origin:0 0;">08-Dec-2023 08:00 AM</div>
<div class="t" style="left:690px;top:269.69px;font-size:11px;line-height:13px;font-weight:400;color:#1a1a1a;letter-spacing:0px;transform:scaleX(0.861);transform-origin:0 0;">14-Dec-2023 04:00 PM</div>
<div class="t" style="left:798px;top:269.69px;font-size:11px;line-height:13px;font-weight:400;color:#1a1a1a;letter-spacing:0px;transform:scaleX(0.86);transform-origin:0 0;"></div>
<div class="a" style="left:3px;top:285px;width:11px;height:16px;background:#0000ff;"></div>
<div class="a" style="left:14px;top:285px;width:13px;height:16px;background:#80ff80;"></div>
<div class="a" style="left:27px;top:285px;width:12px;height:16px;background:#ffff00;"></div>
<div class="a" style="left:39px;top:285px;width:938px;height:16px;background:#fff;"></div>
<div class="a" style="left:39px;top:285px;width:938px;height:1px;background:#d0d0d0;"></div>
<div class="a" style="left:138px;top:285px;width:1px;height:16px;background:#b4b4b4;"></div>
<div class="a" style="left:294px;top:285px;width:1px;height:16px;background:#b4b4b4;"></div>
<div class="a" style="left:369px;top:285px;width:1px;height:16px;background:#b4b4b4;"></div>
<div class="a" style="left:449px;top:285px;width:1px;height:16px;background:#b4b4b4;"></div>
<div class="a" style="left:513px;top:285px;width:1px;height:16px;background:#b4b4b4;"></div>
<div class="a" style="left:579px;top:285px;width:1px;height:16px;background:#b4b4b4;"></div>
<div class="a" style="left:686px;top:285px;width:1px;height:16px;background:#b4b4b4;"></div>
<div class="a" style="left:794px;top:285px;width:1px;height:16px;background:#b4b4b4;"></div>
<div class="a" style="left:901px;top:285px;width:1px;height:16px;background:#b4b4b4;"></div>
<div class="a" style="left:52px;top:290px;width:12px;height:7px;border-radius:2px;background:linear-gradient(#b8e0a0,#5aa83a 55%,#3a8020);border:1px solid #3a6a2a;box-sizing:border-box"></div>
<div class="t" style="left:72px;top:285.69px;font-size:11px;line-height:13px;font-weight:400;color:#1a1a1a;letter-spacing:0px;transform:scaleX(0.865);transform-origin:0 0;">PORT1100</div>
<div class="t" style="left:142px;top:285.69px;font-size:11px;line-height:13px;font-weight:400;color:#1a1a1a;letter-spacing:0px;transform:scaleX(0.8421);transform-origin:0 0;">Surveying - NE</div>
<div class="t" style="left:298px;top:285.69px;font-size:11px;line-height:13px;font-weight:400;color:#1a1a1a;letter-spacing:0px;transform:scaleX(0.83);transform-origin:0 0;">Duration</div>
<div class="t" style="left:46px;width:400px;text-align:right;top:285.69px;font-size:11px;line-height:13px;font-weight:400;color:#1a1a1a;letter-spacing:0px;transform:scaleX(0.865);transform-origin:100% 0;">0%</div>
<div class="t" style="left:111px;width:400px;text-align:right;top:285.69px;font-size:11px;line-height:13px;font-weight:400;color:#1a1a1a;letter-spacing:0px;transform:scaleX(0.857);transform-origin:100% 0;">5.00d</div>
<div class="t" style="left:177px;width:400px;text-align:right;top:285.69px;font-size:11px;line-height:13px;font-weight:400;color:#1a1a1a;letter-spacing:0px;transform:scaleX(0.857);transform-origin:100% 0;">5.00d</div>
<div class="t" style="left:583px;top:285.69px;font-size:11px;line-height:13px;font-weight:400;color:#1a1a1a;letter-spacing:0px;transform:scaleX(0.861);transform-origin:0 0;">08-Dec-2023 08:00 AM</div>
<div class="t" style="left:690px;top:285.69px;font-size:11px;line-height:13px;font-weight:400;color:#1a1a1a;letter-spacing:0px;transform:scaleX(0.861);transform-origin:0 0;">14-Dec-2023 04:00 PM</div>
<div class="t" style="left:798px;top:285.69px;font-size:11px;line-height:13px;font-weight:400;color:#1a1a1a;letter-spacing:0px;transform:scaleX(0.86);transform-origin:0 0;"></div>
<div class="a" style="left:3px;top:301px;width:11px;height:16px;background:#0000ff;"></div>
<div class="a" style="left:14px;top:301px;width:13px;height:16px;background:#80ff80;"></div>
<div class="a" style="left:27px;top:301px;width:950px;height:16px;background:#ffff00;"></div>
<div class="a" style="left:27px;top:301px;width:950px;height:1px;background:#e4e4a0;"></div>
<div class="a" style="left:369px;top:301px;width:1px;height:16px;background:#c8c860;"></div>
<div class="a" style="left:449px;top:301px;width:1px;height:16px;background:#c8c860;"></div>
<div class="a" style="left:513px;top:301px;width:1px;height:16px;background:#c8c860;"></div>
<div class="a" style="left:579px;top:301px;width:1px;height:16px;background:#c8c860;"></div>
<div class="a" style="left:686px;top:301px;width:1px;height:16px;background:#c8c860;"></div>
<div class="a" style="left:794px;top:301px;width:1px;height:16px;background:#c8c860;"></div>
<div class="a" style="left:901px;top:301px;width:1px;height:16px;background:#c8c860;"></div>
<div class="a" style="left:29px;top:305px;width:6px;height:6px;background:#fff;border:1px solid #a0a040"><div class="a" style="left:1px;top:2px;width:4px;height:2px;background:#333"></div></div>
<div class="a" style="left:41px;top:303px;width:9px;height:8px;background:#2546c8;border-right:1px solid #0a1a70;border-bottom:1px solid #0a1a70;box-sizing:border-box"></div>
<div class="a" style="left:45px;top:307px;width:9px;height:8px;background:#3f5fe8;border:1px solid #0a1a70;border-top-color:#5a7af0;border-left-color:#5a7af0;box-sizing:border-box"></div>
<div class="t" style="left:60px;top:303.23px;font-size:10px;line-height:12px;font-weight:700;color:#20205a;letter-spacing:0.1px;">Grading</div>
<div class="t" style="left:46px;width:400px;text-align:right;top:301.69px;font-size:11px;line-height:13px;font-weight:400;color:#3a3a00;letter-spacing:0px;transform:scaleX(0.865);transform-origin:100% 0;">0%</div>
<div class="t" style="left:111px;width:400px;text-align:right;top:301.69px;font-size:11px;line-height:13px;font-weight:400;color:#3a3a00;letter-spacing:0px;transform:scaleX(0.857);transform-origin:100% 0;">5.00d</div>
<div class="t" style="left:177px;width:400px;text-align:right;top:301.69px;font-size:11px;line-height:13px;font-weight:400;color:#3a3a00;letter-spacing:0px;transform:scaleX(0.857);transform-origin:100% 0;">5.00d</div>
<div class="t" style="left:583px;top:301.69px;font-size:11px;line-height:13px;font-weight:400;color:#3a3a00;letter-spacing:0px;transform:scaleX(0.861);transform-origin:0 0;">15-Dec-2023 08:00 AM</div>
<div class="t" style="left:690px;top:301.69px;font-size:11px;line-height:13px;font-weight:400;color:#3a3a00;letter-spacing:0px;transform:scaleX(0.861);transform-origin:0 0;">21-Dec-2023 04:00 PM</div>
<div class="t" style="left:798px;top:301.69px;font-size:11px;line-height:13px;font-weight:400;color:#3a3a00;letter-spacing:0px;transform:scaleX(0.86);transform-origin:0 0;"></div>
<div class="a" style="left:3px;top:317px;width:11px;height:16px;background:#0000ff;"></div>
<div class="a" style="left:14px;top:317px;width:13px;height:16px;background:#80ff80;"></div>
<div class="a" style="left:27px;top:317px;width:12px;height:16px;background:#ffff00;"></div>
<div class="a" style="left:39px;top:317px;width:938px;height:16px;background:#fff;"></div>
<div class="a" style="left:138px;top:317px;width:1px;height:16px;background:#b4b4b4;"></div>
<div class="a" style="left:294px;top:317px;width:1px;height:16px;background:#b4b4b4;"></div>
<div class="a" style="left:369px;top:317px;width:1px;height:16px;background:#b4b4b4;"></div>
<div class="a" style="left:449px;top:317px;width:1px;height:16px;background:#b4b4b4;"></div>
<div class="a" style="left:513px;top:317px;width:1px;height:16px;background:#b4b4b4;"></div>
<div class="a" style="left:579px;top:317px;width:1px;height:16px;background:#b4b4b4;"></div>
<div class="a" style="left:686px;top:317px;width:1px;height:16px;background:#b4b4b4;"></div>
<div class="a" style="left:794px;top:317px;width:1px;height:16px;background:#b4b4b4;"></div>
<div class="a" style="left:901px;top:317px;width:1px;height:16px;background:#b4b4b4;"></div>
<div class="a" style="left:52px;top:322px;width:12px;height:7px;border-radius:2px;background:linear-gradient(#b8e0a0,#5aa83a 55%,#3a8020);border:1px solid #3a6a2a;box-sizing:border-box"></div>
<div class="t" style="left:72px;top:317.69px;font-size:11px;line-height:13px;font-weight:400;color:#1a1a1a;letter-spacing:0px;transform:scaleX(0.865);transform-origin:0 0;">PORT1110</div>
<div class="t" style="left:142px;top:317.69px;font-size:11px;line-height:13px;font-weight:400;color:#1a1a1a;letter-spacing:0px;transform:scaleX(0.845);transform-origin:0 0;">Grading - SW</div>
<div class="t" style="left:298px;top:317.69px;font-size:11px;line-height:13px;font-weight:400;color:#1a1a1a;letter-spacing:0px;transform:scaleX(0.83);transform-origin:0 0;">Duration</div>
<div class="t" style="left:46px;width:400px;text-align:right;top:317.69px;font-size:11px;line-height:13px;font-weight:400;color:#1a1a1a;letter-spacing:0px;transform:scaleX(0.865);transform-origin:100% 0;">0%</div>
<div class="t" style="left:111px;width:400px;text-align:right;top:317.69px;font-size:11px;line-height:13px;font-weight:400;color:#1a1a1a;letter-spacing:0px;transform:scaleX(0.857);transform-origin:100% 0;">5.00d</div>
<div class="t" style="left:177px;width:400px;text-align:right;top:317.69px;font-size:11px;line-height:13px;font-weight:400;color:#1a1a1a;letter-spacing:0px;transform:scaleX(0.857);transform-origin:100% 0;">5.00d</div>
<div class="t" style="left:583px;top:317.69px;font-size:11px;line-height:13px;font-weight:400;color:#1a1a1a;letter-spacing:0px;transform:scaleX(0.861);transform-origin:0 0;">15-Dec-2023 08:00 AM</div>
<div class="t" style="left:690px;top:317.69px;font-size:11px;line-height:13px;font-weight:400;color:#1a1a1a;letter-spacing:0px;transform:scaleX(0.861);transform-origin:0 0;">21-Dec-2023 04:00 PM</div>
<div class="t" style="left:798px;top:317.69px;font-size:11px;line-height:13px;font-weight:400;color:#1a1a1a;letter-spacing:0px;transform:scaleX(0.86);transform-origin:0 0;"></div>
<div class="a" style="left:3px;top:333px;width:11px;height:16px;background:#0000ff;"></div>
<div class="a" style="left:14px;top:333px;width:13px;height:16px;background:#80ff80;"></div>
<div class="a" style="left:27px;top:333px;width:12px;height:16px;background:#ffff00;"></div>
<div class="a" style="left:39px;top:333px;width:938px;height:16px;background:#fff;"></div>
<div class="a" style="left:39px;top:333px;width:938px;height:1px;background:#d0d0d0;"></div>
<div class="a" style="left:138px;top:333px;width:1px;height:16px;background:#b4b4b4;"></div>
<div class="a" style="left:294px;top:333px;width:1px;height:16px;background:#b4b4b4;"></div>
<div class="a" style="left:369px;top:333px;width:1px;height:16px;background:#b4b4b4;"></div>
<div class="a" style="left:449px;top:333px;width:1px;height:16px;background:#b4b4b4;"></div>
<div class="a" style="left:513px;top:333px;width:1px;height:16px;background:#b4b4b4;"></div>
<div class="a" style="left:579px;top:333px;width:1px;height:16px;background:#b4b4b4;"></div>
<div class="a" style="left:686px;top:333px;width:1px;height:16px;background:#b4b4b4;"></div>
<div class="a" style="left:794px;top:333px;width:1px;height:16px;background:#b4b4b4;"></div>
<div class="a" style="left:901px;top:333px;width:1px;height:16px;background:#b4b4b4;"></div>
<div class="a" style="left:52px;top:338px;width:12px;height:7px;border-radius:2px;background:linear-gradient(#b8e0a0,#5aa83a 55%,#3a8020);border:1px solid #3a6a2a;box-sizing:border-box"></div>
<div class="t" style="left:72px;top:333.69px;font-size:11px;line-height:13px;font-weight:400;color:#1a1a1a;letter-spacing:0px;transform:scaleX(0.865);transform-origin:0 0;">PORT1120</div>
<div class="t" style="left:142px;top:333.69px;font-size:11px;line-height:13px;font-weight:400;color:#1a1a1a;letter-spacing:0px;transform:scaleX(0.845);transform-origin:0 0;">Grading - SE</div>
<div class="t" style="left:298px;top:333.69px;font-size:11px;line-height:13px;font-weight:400;color:#1a1a1a;letter-spacing:0px;transform:scaleX(0.83);transform-origin:0 0;">Duration</div>
<div class="t" style="left:46px;width:400px;text-align:right;top:333.69px;font-size:11px;line-height:13px;font-weight:400;color:#1a1a1a;letter-spacing:0px;transform:scaleX(0.865);transform-origin:100% 0;">0%</div>
<div class="t" style="left:111px;width:400px;text-align:right;top:333.69px;font-size:11px;line-height:13px;font-weight:400;color:#1a1a1a;letter-spacing:0px;transform:scaleX(0.857);transform-origin:100% 0;">5.00d</div>
<div class="t" style="left:177px;width:400px;text-align:right;top:333.69px;font-size:11px;line-height:13px;font-weight:400;color:#1a1a1a;letter-spacing:0px;transform:scaleX(0.857);transform-origin:100% 0;">5.00d</div>
<div class="t" style="left:583px;top:333.69px;font-size:11px;line-height:13px;font-weight:400;color:#1a1a1a;letter-spacing:0px;transform:scaleX(0.861);transform-origin:0 0;">15-Dec-2023 08:00 AM</div>
<div class="t" style="left:690px;top:333.69px;font-size:11px;line-height:13px;font-weight:400;color:#1a1a1a;letter-spacing:0px;transform:scaleX(0.861);transform-origin:0 0;">21-Dec-2023 04:00 PM</div>
<div class="t" style="left:798px;top:333.69px;font-size:11px;line-height:13px;font-weight:400;color:#1a1a1a;letter-spacing:0px;transform:scaleX(0.86);transform-origin:0 0;"></div>
<div class="a" style="left:3px;top:349px;width:11px;height:16px;background:#0000ff;"></div>
<div class="a" style="left:14px;top:349px;width:13px;height:16px;background:#80ff80;"></div>
<div class="a" style="left:27px;top:349px;width:12px;height:16px;background:#ffff00;"></div>
<div class="a" style="left:39px;top:349px;width:938px;height:16px;background:#fff;"></div>
<div class="a" style="left:39px;top:349px;width:938px;height:1px;background:#d0d0d0;"></div>
<div class="a" style="left:138px;top:349px;width:1px;height:16px;background:#b4b4b4;"></div>
<div class="a" style="left:294px;top:349px;width:1px;height:16px;background:#b4b4b4;"></div>
<div class="a" style="left:369px;top:349px;width:1px;height:16px;background:#b4b4b4;"></div>
<div class="a" style="left:449px;top:349px;width:1px;height:16px;background:#b4b4b4;"></div>
<div class="a" style="left:513px;top:349px;width:1px;height:16px;background:#b4b4b4;"></div>
<div class="a" style="left:579px;top:349px;width:1px;height:16px;background:#b4b4b4;"></div>
<div class="a" style="left:686px;top:349px;width:1px;height:16px;background:#b4b4b4;"></div>
<div class="a" style="left:794px;top:349px;width:1px;height:16px;background:#b4b4b4;"></div>
<div class="a" style="left:901px;top:349px;width:1px;height:16px;background:#b4b4b4;"></div>
<div class="a" style="left:52px;top:354px;width:12px;height:7px;border-radius:2px;background:linear-gradient(#b8e0a0,#5aa83a 55%,#3a8020);border:1px solid #3a6a2a;box-sizing:border-box"></div>
<div class="t" style="left:72px;top:349.69px;font-size:11px;line-height:13px;font-weight:400;color:#1a1a1a;letter-spacing:0px;transform:scaleX(0.865);transform-origin:0 0;">PORT1130</div>
<div class="t" style="left:142px;top:349.69px;font-size:11px;line-height:13px;font-weight:400;color:#1a1a1a;letter-spacing:0px;transform:scaleX(0.845);transform-origin:0 0;">Grading - NW</div>
<div class="t" style="left:298px;top:349.69px;font-size:11px;line-height:13px;font-weight:400;color:#1a1a1a;letter-spacing:0px;transform:scaleX(0.83);transform-origin:0 0;">Duration</div>
<div class="t" style="left:46px;width:400px;text-align:right;top:349.69px;font-size:11px;line-height:13px;font-weight:400;color:#1a1a1a;letter-spacing:0px;transform:scaleX(0.865);transform-origin:100% 0;">0%</div>
<div class="t" style="left:111px;width:400px;text-align:right;top:349.69px;font-size:11px;line-height:13px;font-weight:400;color:#1a1a1a;letter-spacing:0px;transform:scaleX(0.857);transform-origin:100% 0;">5.00d</div>
<div class="t" style="left:177px;width:400px;text-align:right;top:349.69px;font-size:11px;line-height:13px;font-weight:400;color:#1a1a1a;letter-spacing:0px;transform:scaleX(0.857);transform-origin:100% 0;">5.00d</div>
<div class="t" style="left:583px;top:349.69px;font-size:11px;line-height:13px;font-weight:400;color:#1a1a1a;letter-spacing:0px;transform:scaleX(0.861);transform-origin:0 0;">15-Dec-2023 08:00 AM</div>
<div class="t" style="left:690px;top:349.69px;font-size:11px;line-height:13px;font-weight:400;color:#1a1a1a;letter-spacing:0px;transform:scaleX(0.861);transform-origin:0 0;">21-Dec-2023 04:00 PM</div>
<div class="t" style="left:798px;top:349.69px;font-size:11px;line-height:13px;font-weight:400;color:#1a1a1a;letter-spacing:0px;transform:scaleX(0.86);transform-origin:0 0;"></div>
<div class="a" style="left:3px;top:365px;width:11px;height:16px;background:#0000ff;"></div>
<div class="a" style="left:14px;top:365px;width:13px;height:16px;background:#80ff80;"></div>
<div class="a" style="left:27px;top:365px;width:12px;height:16px;background:#ffff00;"></div>
<div class="a" style="left:39px;top:365px;width:938px;height:16px;background:#fff;"></div>
<div class="a" style="left:39px;top:365px;width:938px;height:1px;background:#d0d0d0;"></div>
<div class="a" style="left:138px;top:365px;width:1px;height:16px;background:#b4b4b4;"></div>
<div class="a" style="left:294px;top:365px;width:1px;height:16px;background:#b4b4b4;"></div>
<div class="a" style="left:369px;top:365px;width:1px;height:16px;background:#b4b4b4;"></div>
<div class="a" style="left:449px;top:365px;width:1px;height:16px;background:#b4b4b4;"></div>
<div class="a" style="left:513px;top:365px;width:1px;height:16px;background:#b4b4b4;"></div>
<div class="a" style="left:579px;top:365px;width:1px;height:16px;background:#b4b4b4;"></div>
<div class="a" style="left:686px;top:365px;width:1px;height:16px;background:#b4b4b4;"></div>
<div class="a" style="left:794px;top:365px;width:1px;height:16px;background:#b4b4b4;"></div>
<div class="a" style="left:901px;top:365px;width:1px;height:16px;background:#b4b4b4;"></div>
<div class="a" style="left:52px;top:370px;width:12px;height:7px;border-radius:2px;background:linear-gradient(#b8e0a0,#5aa83a 55%,#3a8020);border:1px solid #3a6a2a;box-sizing:border-box"></div>
<div class="t" style="left:72px;top:365.69px;font-size:11px;line-height:13px;font-weight:400;color:#1a1a1a;letter-spacing:0px;transform:scaleX(0.865);transform-origin:0 0;">PORT1140</div>
<div class="t" style="left:142px;top:365.69px;font-size:11px;line-height:13px;font-weight:400;color:#1a1a1a;letter-spacing:0px;transform:scaleX(0.845);transform-origin:0 0;">Grading - NE</div>
<div class="t" style="left:298px;top:365.69px;font-size:11px;line-height:13px;font-weight:400;color:#1a1a1a;letter-spacing:0px;transform:scaleX(0.83);transform-origin:0 0;">Duration</div>
<div class="t" style="left:46px;width:400px;text-align:right;top:365.69px;font-size:11px;line-height:13px;font-weight:400;color:#1a1a1a;letter-spacing:0px;transform:scaleX(0.865);transform-origin:100% 0;">0%</div>
<div class="t" style="left:111px;width:400px;text-align:right;top:365.69px;font-size:11px;line-height:13px;font-weight:400;color:#1a1a1a;letter-spacing:0px;transform:scaleX(0.857);transform-origin:100% 0;">5.00d</div>
<div class="t" style="left:177px;width:400px;text-align:right;top:365.69px;font-size:11px;line-height:13px;font-weight:400;color:#1a1a1a;letter-spacing:0px;transform:scaleX(0.857);transform-origin:100% 0;">5.00d</div>
<div class="t" style="left:583px;top:365.69px;font-size:11px;line-height:13px;font-weight:400;color:#1a1a1a;letter-spacing:0px;transform:scaleX(0.861);transform-origin:0 0;">15-Dec-2023 08:00 AM</div>
<div class="t" style="left:690px;top:365.69px;font-size:11px;line-height:13px;font-weight:400;color:#1a1a1a;letter-spacing:0px;transform:scaleX(0.861);transform-origin:0 0;">21-Dec-2023 04:00 PM</div>
<div class="t" style="left:798px;top:365.69px;font-size:11px;line-height:13px;font-weight:400;color:#1a1a1a;letter-spacing:0px;transform:scaleX(0.86);transform-origin:0 0;"></div>
<div class="a" style="left:3px;top:381px;width:11px;height:16px;background:#0000ff;"></div>
<div class="a" style="left:14px;top:381px;width:13px;height:16px;background:#80ff80;"></div>
<div class="a" style="left:27px;top:381px;width:950px;height:16px;background:#ffff00;"></div>
<div class="a" style="left:27px;top:381px;width:950px;height:1px;background:#e4e4a0;"></div>
<div class="a" style="left:369px;top:381px;width:1px;height:16px;background:#c8c860;"></div>
<div class="a" style="left:449px;top:381px;width:1px;height:16px;background:#c8c860;"></div>
<div class="a" style="left:513px;top:381px;width:1px;height:16px;background:#c8c860;"></div>
<div class="a" style="left:579px;top:381px;width:1px;height:16px;background:#c8c860;"></div>
<div class="a" style="left:686px;top:381px;width:1px;height:16px;background:#c8c860;"></div>
<div class="a" style="left:794px;top:381px;width:1px;height:16px;background:#c8c860;"></div>
<div class="a" style="left:901px;top:381px;width:1px;height:16px;background:#c8c860;"></div>
<div class="a" style="left:29px;top:385px;width:6px;height:6px;background:#fff;border:1px solid #a0a040"><div class="a" style="left:1px;top:2px;width:4px;height:2px;background:#333"></div></div>
<div class="a" style="left:41px;top:383px;width:9px;height:8px;background:#2546c8;border-right:1px solid #0a1a70;border-bottom:1px solid #0a1a70;box-sizing:border-box"></div>
<div class="a" style="left:45px;top:387px;width:9px;height:8px;background:#3f5fe8;border:1px solid #0a1a70;border-top-color:#5a7af0;border-left-color:#5a7af0;box-sizing:border-box"></div>
<div class="t" style="left:60px;top:383.23px;font-size:10px;line-height:12px;font-weight:700;color:#20205a;letter-spacing:0.1px;">Installation</div>
<div class="t" style="left:46px;width:400px;text-align:right;top:381.69px;font-size:11px;line-height:13px;font-weight:400;color:#3a3a00;letter-spacing:0px;transform:scaleX(0.865);transform-origin:100% 0;">0%</div>
<div class="t" style="left:111px;width:400px;text-align:right;top:381.69px;font-size:11px;line-height:13px;font-weight:400;color:#3a3a00;letter-spacing:0px;transform:scaleX(0.8583);transform-origin:100% 0;">40.00d</div>
<div class="t" style="left:177px;width:400px;text-align:right;top:381.69px;font-size:11px;line-height:13px;font-weight:400;color:#3a3a00;letter-spacing:0px;transform:scaleX(0.8583);transform-origin:100% 0;">40.00d</div>
<div class="t" style="left:583px;top:381.69px;font-size:11px;line-height:13px;font-weight:400;color:#3a3a00;letter-spacing:0px;transform:scaleX(0.861);transform-origin:0 0;">22-Dec-2023 08:00 AM</div>
<div class="t" style="left:690px;top:381.69px;font-size:11px;line-height:13px;font-weight:400;color:#3a3a00;letter-spacing:0px;transform:scaleX(0.861);transform-origin:0 0;">15-Feb-2024 04:00 PM</div>
<div class="t" style="left:798px;top:381.69px;font-size:11px;line-height:13px;font-weight:400;color:#3a3a00;letter-spacing:0px;transform:scaleX(0.86);transform-origin:0 0;"></div>
<div class="a" style="left:3px;top:397px;width:11px;height:2px;background:#0000ff;"></div>
<div class="a" style="left:14px;top:397px;width:13px;height:2px;background:#80ff80;"></div>
<div class="a" style="left:27px;top:397px;width:12px;height:2px;background:#ffff00;"></div>
<div class="a" style="left:39px;top:397px;width:938px;height:2px;background:#fff;"></div>
<div class="a" style="left:138px;top:397px;width:1px;height:2px;background:#b4b4b4;"></div>
<div class="a" style="left:294px;top:397px;width:1px;height:2px;background:#b4b4b4;"></div>
<div class="a" style="left:369px;top:397px;width:1px;height:2px;background:#b4b4b4;"></div>
<div class="a" style="left:449px;top:397px;width:1px;height:2px;background:#b4b4b4;"></div>
<div class="a" style="left:513px;top:397px;width:1px;height:2px;background:#b4b4b4;"></div>
<div class="a" style="left:579px;top:397px;width:1px;height:2px;background:#b4b4b4;"></div>
<div class="a" style="left:686px;top:397px;width:1px;height:2px;background:#b4b4b4;"></div>
<div class="a" style="left:794px;top:397px;width:1px;height:2px;background:#b4b4b4;"></div>
<div class="a" style="left:901px;top:397px;width:1px;height:2px;background:#b4b4b4;"></div>
<div class="a" style="left:977px;top:3px;width:15px;height:396px;background:#f0f0f0;"></div>
<svg class="a" style="left:980px;top:8px" width="10" height="8"><path d="M2 5.5 L5 2.5 L8 5.5" fill="none" stroke="#505050" stroke-width="1.5"/></svg>
<div class="a" style="left:978px;top:18px;width:13px;height:15px;background:#cdcdcd;"></div>
<svg class="a" style="left:980px;top:387px" width="10" height="8"><path d="M1.5 2 L5 5.5 L8.5 2" fill="none" stroke="#505050" stroke-width="1.6"/></svg>
<div class="a" style="left:992px;top:3px;width:5px;height:411px;background:#f0f0f0;"></div>
<div class="a" style="left:993px;top:3px;width:1px;height:411px;background:#d4d4d4;"></div>
<div class="a" style="left:996px;top:3px;width:2px;height:411px;background:#707070;"></div>
<div class="a" style="left:3px;top:399px;width:989px;height:15px;background:#f0f0f0;"></div>
<svg class="a" style="left:6px;top:403px" width="8" height="10"><path d="M6 1.5 L2.5 5 L6 8.5" fill="none" stroke="#505050" stroke-width="1.6"/></svg>
<div class="a" style="left:18px;top:400px;width:15px;height:13px;background:#cdcdcd;"></div>
<svg class="a" style="left:966px;top:402px" width="8" height="10"><path d="M2 1.5 L5.5 5 L2 8.5" fill="none" stroke="#505050" stroke-width="1.6"/></svg>
<div class="a" style="left:998px;top:3px;width:426px;height:395px;overflow:hidden"><div class="a" style="left:-998px;top:-3px;width:1427px;height:598px"><svg class="a" style="left:0;top:0" width="1427" height="598"><rect x="997" y="3" width="427" height="30" fill="#f0f0f0"/><rect x="997" y="33" width="427" height="365" fill="#ffffff"/><rect x="929.48" y="36" width="27.38" height="362" fill="#eeeeee"/><rect x="1025.31" y="36" width="27.38" height="362" fill="#eeeeee"/><rect x="1121.14" y="36" width="27.38" height="362" fill="#eeeeee"/><rect x="1216.97" y="36" width="27.38" height="362" fill="#eeeeee"/><rect x="1312.80" y="36" width="27.38" height="362" fill="#eeeeee"/><rect x="1408.63" y="36" width="27.38" height="362" fill="#eeeeee"/><line x1="997" y1="54.5" x2="1424" y2="54.5" stroke="#cdcdcd" stroke-width="1" stroke-dasharray="3 4"/><line x1="997" y1="74.5" x2="1424" y2="74.5" stroke="#cdcdcd" stroke-width="1" stroke-dasharray="3 4"/><line x1="997" y1="90.5" x2="1424" y2="90.5" stroke="#cdcdcd" stroke-width="1" stroke-dasharray="3 4"/><line x1="997" y1="106.5" x2="1424" y2="106.5" stroke="#cdcdcd" stroke-width="1" stroke-dasharray="3 4"/><line x1="997" y1="122.5" x2="1424" y2="122.5" stroke="#cdcdcd" stroke-width="1" stroke-dasharray="3 4"/><line x1="997" y1="138.5" x2="1424" y2="138.5" stroke="#cdcdcd" stroke-width="1" stroke-dasharray="3 4"/><line x1="997" y1="158.5" x2="1424" y2="158.5" stroke="#cdcdcd" stroke-width="1" stroke-dasharray="3 4"/><line x1="997" y1="174.5" x2="1424" y2="174.5" stroke="#cdcdcd" stroke-width="1" stroke-dasharray="3 4"/><line x1="997" y1="189.5" x2="1424" y2="189.5" stroke="#cdcdcd" stroke-width="1" stroke-dasharray="3 4"/><line x1="997" y1="205.5" x2="1424" y2="205.5" stroke="#cdcdcd" stroke-width="1" stroke-dasharray="3 4"/><line x1="997" y1="221.5" x2="1424" y2="221.5" stroke="#cdcdcd" stroke-width="1" stroke-dasharray="3 4"/><line x1="997" y1="237.5" x2="1424" y2="237.5" stroke="#cdcdcd" stroke-width="1" stroke-dasharray="3 4"/><line x1="997" y1="253.5" x2="1424" y2="253.5" stroke="#cdcdcd" stroke-width="1" stroke-dasharray="3 4"/><line x1="997" y1="269.5" x2="1424" y2="269.5" stroke="#cdcdcd" stroke-width="1" stroke-dasharray="3 4"/><line x1="997" y1="285.5" x2="1424" y2="285.5" stroke="#cdcdcd" stroke-width="1" stroke-dasharray="3 4"/><line x1="997" y1="301.5" x2="1424" y2="301.5" stroke="#cdcdcd" stroke-width="1" stroke-dasharray="3 4"/><line x1="997" y1="317.5" x2="1424" y2="317.5" stroke="#cdcdcd" stroke-width="1" stroke-dasharray="3 4"/><line x1="997" y1="333.5" x2="1424" y2="333.5" stroke="#cdcdcd" stroke-width="1" stroke-dasharray="3 4"/><line x1="997" y1="349.5" x2="1424" y2="349.5" stroke="#cdcdcd" stroke-width="1" stroke-dasharray="3 4"/><line x1="997" y1="365.5" x2="1424" y2="365.5" stroke="#cdcdcd" stroke-width="1" stroke-dasharray="3 4"/><line x1="997" y1="381.5" x2="1424" y2="381.5" stroke="#cdcdcd" stroke-width="1" stroke-dasharray="3 4"/><line x1="1012.5" y1="36" x2="1012.5" y2="398" stroke="#cdcdcd" stroke-width="1" stroke-dasharray="3 4"/><line x1="1025.5" y1="36" x2="1025.5" y2="398" stroke="#cdcdcd" stroke-width="1" stroke-dasharray="3 4"/><line x1="1053.5" y1="36" x2="1053.5" y2="398" stroke="#cdcdcd" stroke-width="1" stroke-dasharray="3 4"/><line x1="1066.5" y1="36" x2="1066.5" y2="398" stroke="#cdcdcd" stroke-width="1" stroke-dasharray="3 4"/><line x1="1080.5" y1="36" x2="1080.5" y2="398" stroke="#cdcdcd" stroke-width="1" stroke-dasharray="3 4"/><line x1="1094.5" y1="36" x2="1094.5" y2="398" stroke="#cdcdcd" stroke-width="1" stroke-dasharray="3 4"/><line x1="1107.5" y1="36" x2="1107.5" y2="398" stroke="#cdcdcd" stroke-width="1" stroke-dasharray="3 4"/><line x1="1121.5" y1="36" x2="1121.5" y2="398" stroke="#cdcdcd" stroke-width="1" stroke-dasharray="3 4"/><line x1="1149.5" y1="36" x2="1149.5" y2="398" stroke="#cdcdcd" stroke-width="1" stroke-dasharray="3 4"/><line x1="1162.5" y1="36" x2="1162.5" y2="398" stroke="#cdcdcd" stroke-width="1" stroke-dasharray="3 4"/><line x1="1176.5" y1="36" x2="1176.5" y2="398" stroke="#cdcdcd" stroke-width="1" stroke-dasharray="3 4"/><line x1="1190.5" y1="36" x2="1190.5" y2="398" stroke="#cdcdcd" stroke-width="1" stroke-dasharray="3 4"/><line x1="1203.5" y1="36" x2="1203.5" y2="398" stroke="#cdcdcd" stroke-width="1" stroke-dasharray="3 4"/><line x1="1217.5" y1="36" x2="1217.5" y2="398" stroke="#cdcdcd" stroke-width="1" stroke-dasharray="3 4"/><line x1="1244.5" y1="36" x2="1244.5" y2="398" stroke="#cdcdcd" stroke-width="1" stroke-dasharray="3 4"/><line x1="1258.5" y1="36" x2="1258.5" y2="398" stroke="#cdcdcd" stroke-width="1" stroke-dasharray="3 4"/><line x1="1272.5" y1="36" x2="1272.5" y2="398" stroke="#cdcdcd" stroke-width="1" stroke-dasharray="3 4"/><line x1="1285.5" y1="36" x2="1285.5" y2="398" stroke="#cdcdcd" stroke-width="1" stroke-dasharray="3 4"/><line x1="1299.5" y1="36" x2="1299.5" y2="398" stroke="#cdcdcd" stroke-width="1" stroke-dasharray="3 4"/><line x1="1313.5" y1="36" x2="1313.5" y2="398" stroke="#cdcdcd" stroke-width="1" stroke-dasharray="3 4"/><line x1="1340.5" y1="36" x2="1340.5" y2="398" stroke="#cdcdcd" stroke-width="1" stroke-dasharray="3 4"/><line x1="1354.5" y1="36" x2="1354.5" y2="398" stroke="#cdcdcd" stroke-width="1" stroke-dasharray="3 4"/><line x1="1368.5" y1="36" x2="1368.5" y2="398" stroke="#cdcdcd" stroke-width="1" stroke-dasharray="3 4"/><line x1="1381.5" y1="36" x2="1381.5" y2="398" stroke="#cdcdcd" stroke-width="1" stroke-dasharray="3 4"/><line x1="1395.5" y1="36" x2="1395.5" y2="398" stroke="#cdcdcd" stroke-width="1" stroke-dasharray="3 4"/><line x1="1409.5" y1="36" x2="1409.5" y2="398" stroke="#cdcdcd" stroke-width="1" stroke-dasharray="3 4"/><line x1="1039.5" y1="36" x2="1039.5" y2="398" stroke="#a0a0a0" stroke-width="1"/><line x1="1135.5" y1="36" x2="1135.5" y2="398" stroke="#a0a0a0" stroke-width="1"/><line x1="1231.5" y1="36" x2="1231.5" y2="398" stroke="#a0a0a0" stroke-width="1"/><line x1="1326.5" y1="36" x2="1326.5" y2="398" stroke="#a0a0a0" stroke-width="1"/><line x1="1422.5" y1="36" x2="1422.5" y2="398" stroke="#a0a0a0" stroke-width="1"/><line x1="997" y1="17.5" x2="1424" y2="17.5" stroke="#3c3c3c" stroke-width="1"/><rect x="997" y="33" width="427" height="3" fill="#fdfdfd"/><line x1="997" y1="33.5" x2="1424" y2="33.5" stroke="#3c3c3c" stroke-width="1"/><line x1="1012.5" y1="17" x2="1012.5" y2="34" stroke="#3c3c3c" stroke-width="1"/><line x1="1025.5" y1="17" x2="1025.5" y2="34" stroke="#3c3c3c" stroke-width="1"/><line x1="1039.5" y1="3" x2="1039.5" y2="34" stroke="#3c3c3c" stroke-width="1"/><line x1="1053.5" y1="17" x2="1053.5" y2="34" stroke="#3c3c3c" stroke-width="1"/><line x1="1066.5" y1="17" x2="1066.5" y2="34" stroke="#3c3c3c" stroke-width="1"/><line x1="1080.5" y1="17" x2="1080.5" y2="34" stroke="#3c3c3c" stroke-width="1"/><line x1="1094.5" y1="17" x2="1094.5" y2="34" stroke="#3c3c3c" stroke-width="1"/><line x1="1107.5" y1="17" x2="1107.5" y2="34" stroke="#3c3c3c" stroke-width="1"/><line x1="1121.5" y1="17" x2="1121.5" y2="34" stroke="#3c3c3c" stroke-width="1"/><line x1="1135.5" y1="3" x2="1135.5" y2="34" stroke="#3c3c3c" stroke-width="1"/><line x1="1149.5" y1="17" x2="1149.5" y2="34" stroke="#3c3c3c" stroke-width="1"/><line x1="1162.5" y1="17" x2="1162.5" y2="34" stroke="#3c3c3c" stroke-width="1"/><line x1="1176.5" y1="17" x2="1176.5" y2="34" stroke="#3c3c3c" stroke-width="1"/><line x1="1190.5" y1="17" x2="1190.5" y2="34" stroke="#3c3c3c" stroke-width="1"/><line x1="1203.5" y1="17" x2="1203.5" y2="34" stroke="#3c3c3c" stroke-width="1"/><line x1="1217.5" y1="17" x2="1217.5" y2="34" stroke="#3c3c3c" stroke-width="1"/><line x1="1231.5" y1="3" x2="1231.5" y2="34" stroke="#3c3c3c" stroke-width="1"/><line x1="1244.5" y1="17" x2="1244.5" y2="34" stroke="#3c3c3c" stroke-width="1"/><line x1="1258.5" y1="17" x2="1258.5" y2="34" stroke="#3c3c3c" stroke-width="1"/><line x1="1272.5" y1="17" x2="1272.5" y2="34" stroke="#3c3c3c" stroke-width="1"/><line x1="1285.5" y1="17" x2="1285.5" y2="34" stroke="#3c3c3c" stroke-width="1"/><line x1="1299.5" y1="17" x2="1299.5" y2="34" stroke="#3c3c3c" stroke-width="1"/><line x1="1313.5" y1="17" x2="1313.5" y2="34" stroke="#3c3c3c" stroke-width="1"/><line x1="1326.5" y1="3" x2="1326.5" y2="34" stroke="#3c3c3c" stroke-width="1"/><line x1="1340.5" y1="17" x2="1340.5" y2="34" stroke="#3c3c3c" stroke-width="1"/><line x1="1354.5" y1="17" x2="1354.5" y2="34" stroke="#3c3c3c" stroke-width="1"/><line x1="1368.5" y1="17" x2="1368.5" y2="34" stroke="#3c3c3c" stroke-width="1"/><line x1="1381.5" y1="17" x2="1381.5" y2="34" stroke="#3c3c3c" stroke-width="1"/><line x1="1395.5" y1="17" x2="1395.5" y2="34" stroke="#3c3c3c" stroke-width="1"/><line x1="1409.5" y1="17" x2="1409.5" y2="34" stroke="#3c3c3c" stroke-width="1"/><line x1="1422.5" y1="3" x2="1422.5" y2="34" stroke="#3c3c3c" stroke-width="1"/><rect x="1009.5" y="33" width="3.5" height="365" fill="#0000c8"/></svg>
<div class="t" style="left:791.585px;width:400px;text-align:center;top:19.88px;font-size:9px;line-height:11px;font-weight:400;color:#333333;letter-spacing:0px;">W</div>
<div class="t" style="left:805.275px;width:400px;text-align:center;top:19.88px;font-size:9px;line-height:11px;font-weight:400;color:#333333;letter-spacing:0px;">T</div>
<div class="t" style="left:818.965px;width:400px;text-align:center;top:19.88px;font-size:9px;line-height:11px;font-weight:400;color:#333333;letter-spacing:-0.2px;">Fri</div>
<div class="t" style="left:832.655px;width:400px;text-align:center;top:19.88px;font-size:9px;line-height:11px;font-weight:400;color:#333333;letter-spacing:0px;">S</div>
<div class="t" style="left:846.345px;width:400px;text-align:center;top:19.88px;font-size:9px;line-height:11px;font-weight:400;color:#333333;letter-spacing:0px;">S</div>
<div class="t" style="left:860.0350000000001px;width:400px;text-align:center;top:19.88px;font-size:9px;line-height:11px;font-weight:400;color:#333333;letter-spacing:0px;">M</div>
<div class="t" style="left:873.7250000000001px;width:400px;text-align:center;top:19.88px;font-size:9px;line-height:11px;font-weight:400;color:#333333;letter-spacing:0px;">T</div>
<div class="t" style="left:887.415px;width:400px;text-align:center;top:19.88px;font-size:9px;line-height:11px;font-weight:400;color:#333333;letter-spacing:0px;">W</div>
<div class="t" style="left:901.105px;width:400px;text-align:center;top:19.88px;font-size:9px;line-height:11px;font-weight:400;color:#333333;letter-spacing:0px;">T</div>
<div class="t" style="left:914.7950000000001px;width:400px;text-align:center;top:19.88px;font-size:9px;line-height:11px;font-weight:400;color:#333333;letter-spacing:-0.2px;">Fri</div>
<div class="t" style="left:928.4850000000001px;width:400px;text-align:center;top:19.88px;font-size:9px;line-height:11px;font-weight:400;color:#333333;letter-spacing:0px;">S</div>
<div class="t" style="left:942.175px;width:400px;text-align:center;top:19.88px;font-size:9px;line-height:11px;font-weight:400;color:#333333;letter-spacing:0px;">S</div>
<div class="t" style="left:955.865px;width:400px;text-align:center;top:19.88px;font-size:9px;line-height:11px;font-weight:400;color:#333333;letter-spacing:0px;">M</div>
<div class="t" style="left:969.5550000000001px;width:400px;text-align:center;top:19.88px;font-size:9px;line-height:11px;font-weight:400;color:#333333;letter-spacing:0px;">T</div>
<div class="t" style="left:983.2450000000001px;width:400px;text-align:center;top:19.88px;font-size:9px;line-height:11px;font-weight:400;color:#333333;letter-spacing:0px;">W</div>
<div class="t" style="left:996.935px;width:400px;text-align:center;top:19.88px;font-size:9px;line-height:11px;font-weight:400;color:#333333;letter-spacing:0px;">T</div>
<div class="t" style="left:1010.625px;width:400px;text-align:center;top:19.88px;font-size:9px;line-height:11px;font-weight:400;color:#333333;letter-spacing:-0.2px;">Fri</div>
<div class="t" style="left:1024.315px;width:400px;text-align:center;top:19.88px;font-size:9px;line-height:11px;font-weight:400;color:#333333;letter-spacing:0px;">S</div>
<div class="t" style="left:1038.005px;width:400px;text-align:center;top:19.88px;font-size:9px;line-height:11px;font-weight:400;color:#333333;letter-spacing:0px;">S</div>
<div class="t" style="left:1051.695px;width:400px;text-align:center;top:19.88px;font-size:9px;line-height:11px;font-weight:400;color:#333333;letter-spacing:0px;">M</div>
<div class="t" style="left:1065.385px;width:400px;text-align:center;top:19.88px;font-size:9px;line-height:11px;font-weight:400;color:#333333;letter-spacing:0px;">T</div>
<div class="t" style="left:1079.075px;width:400px;text-align:center;top:19.88px;font-size:9px;line-height:11px;font-weight:400;color:#333333;letter-spacing:0px;">W</div>
<div class="t" style="left:1092.765px;width:400px;text-align:center;top:19.88px;font-size:9px;line-height:11px;font-weight:400;color:#333333;letter-spacing:0px;">T</div>
<div class="t" style="left:1106.4550000000002px;width:400px;text-align:center;top:19.88px;font-size:9px;line-height:11px;font-weight:400;color:#333333;letter-spacing:-0.2px;">Fri</div>
<div class="t" style="left:1120.145px;width:400px;text-align:center;top:19.88px;font-size:9px;line-height:11px;font-weight:400;color:#333333;letter-spacing:0px;">S</div>
<div class="t" style="left:1133.835px;width:400px;text-align:center;top:19.88px;font-size:9px;line-height:11px;font-weight:400;color:#333333;letter-spacing:0px;">S</div>
<div class="t" style="left:1147.525px;width:400px;text-align:center;top:19.88px;font-size:9px;line-height:11px;font-weight:400;color:#333333;letter-spacing:0px;">M</div>
<div class="t" style="left:1161.215px;width:400px;text-align:center;top:19.88px;font-size:9px;line-height:11px;font-weight:400;color:#333333;letter-spacing:0px;">T</div>
<div class="t" style="left:1174.905px;width:400px;text-align:center;top:19.88px;font-size:9px;line-height:11px;font-weight:400;color:#333333;letter-spacing:0px;">W</div>
<div class="t" style="left:1188.595px;width:400px;text-align:center;top:19.88px;font-size:9px;line-height:11px;font-weight:400;color:#333333;letter-spacing:0px;">T</div>
<div class="t" style="left:1202.285px;width:400px;text-align:center;top:19.88px;font-size:9px;line-height:11px;font-weight:400;color:#333333;letter-spacing:-0.2px;">Fri</div>
<div class="t" style="left:1215.9750000000001px;width:400px;text-align:center;top:19.88px;font-size:9px;line-height:11px;font-weight:400;color:#333333;letter-spacing:0px;">S</div>
<div class="t" style="left:1229.665px;width:400px;text-align:center;top:19.88px;font-size:9px;line-height:11px;font-weight:400;color:#333333;letter-spacing:0px;">S</div>
<div class="t" style="left:786.0849999999999px;width:400px;text-align:center;top:4.04px;font-size:10px;line-height:12px;font-weight:400;color:#3a3a3a;letter-spacing:0px;">Nov 26</div>
<div class="t" style="left:886.915px;width:400px;text-align:center;top:4.04px;font-size:10px;line-height:12px;font-weight:400;color:#3a3a3a;letter-spacing:0px;">Dec 03</div>
<div class="t" style="left:982.7449999999999px;width:400px;text-align:center;top:4.04px;font-size:10px;line-height:12px;font-weight:400;color:#3a3a3a;letter-spacing:0px;">Dec 10</div>
<div class="t" style="left:1078.575px;width:400px;text-align:center;top:4.04px;font-size:10px;line-height:12px;font-weight:400;color:#3a3a3a;letter-spacing:0px;">Dec 17</div>
<div class="t" style="left:1174.405px;width:400px;text-align:center;top:4.04px;font-size:10px;line-height:12px;font-weight:400;color:#3a3a3a;letter-spacing:0px;">Dec 24</div>
<div class="t" style="left:1270.235px;width:400px;text-align:center;top:4.04px;font-size:10px;line-height:12px;font-weight:400;color:#3a3a3a;letter-spacing:0px;">Dec 31</div>
<svg class="a" style="left:0;top:0" width="1427" height="598"><rect x="1013" y="36.5" width="411" height="4" fill="#000"/><polygon points="1012.5,39.5 1019.5,39.5 1016,44.5" fill="#000"/><rect x="1013" y="58.5" width="411" height="4" fill="#000"/><polygon points="1012.5,61.5 1019.5,61.5 1016,66.5" fill="#000"/><rect x="1108" y="141.5" width="316" height="4" fill="#000"/><polygon points="1107.5,144.5 1114.5,144.5 1111,149.5" fill="#000"/><rect x="1108" y="161" width="93.5" height="4" fill="#000"/><polygon points="1107.5,164 1114.5,164 1111,169" fill="#000"/><polygon points="1195.0,164 1202.0,164 1198.5,169" fill="#000"/><rect x="1108" y="225" width="93.5" height="4" fill="#000"/><polygon points="1107.5,228 1114.5,228 1111,233" fill="#000"/><polygon points="1195.0,228 1202.0,228 1198.5,233" fill="#000"/><rect x="1204" y="305" width="93.5" height="4" fill="#000"/><polygon points="1203.5,308 1210.5,308 1207,313" fill="#000"/><polygon points="1291.0,308 1298.0,308 1294.5,313" fill="#000"/><rect x="1300" y="385" width="124" height="4" fill="#000"/><polygon points="1299.5,388 1306.5,388 1303,393" fill="#000"/><path d="M1016.5 84 V88.5 H1100.5 V96.5 H1104" fill="none" stroke="#c83030" stroke-width="1"/><polygon points="1102.5,94.0 1108.0,96.5 1102.5,99.0" fill="#e00000" stroke="#a00000" stroke-width="0.7"/><path d="M1112.5 100 V103.5 H1100.5 V112.5 H1104" fill="none" stroke="#c83030" stroke-width="1"/><polygon points="1102.5,110.0 1108.0,112.5 1102.5,115.0" fill="#e00000" stroke="#a00000" stroke-width="0.7"/><path d="M1112.5 116 V120.5 H1100.5 V291.5" fill="none" stroke="#c83030" stroke-width="1"/><path d="M1112.5 120.5 H1142.5 V180.5 H1148" fill="none" stroke="#c83030" stroke-width="1"/><polygon points="1147,178.0 1152.5,180.5 1147,183.0" fill="#e00000" stroke="#a00000" stroke-width="0.7"/><path d="M1100.5 196.5 H1104" fill="none" stroke="#c83030" stroke-width="1"/><polygon points="1105,194.0 1110.5,196.5 1105,199.0" fill="#e00000" stroke="#a00000" stroke-width="0.7"/><path d="M1100.5 212.5 H1104" fill="none" stroke="#c83030" stroke-width="1"/><polygon points="1105,210.0 1110.5,212.5 1105,215.0" fill="#e00000" stroke="#a00000" stroke-width="0.7"/><path d="M1100.5 244.5 H1104" fill="none" stroke="#c83030" stroke-width="1"/><polygon points="1105,242.0 1110.5,244.5 1105,247.0" fill="#e00000" stroke="#a00000" stroke-width="0.7"/><path d="M1100.5 260.5 H1104" fill="none" stroke="#c83030" stroke-width="1"/><polygon points="1105,258.0 1110.5,260.5 1105,263.0" fill="#e00000" stroke="#a00000" stroke-width="0.7"/><path d="M1100.5 276.5 H1104" fill="none" stroke="#c83030" stroke-width="1"/><polygon points="1105,274.0 1110.5,276.5 1105,279.0" fill="#e00000" stroke="#a00000" stroke-width="0.7"/><path d="M1100.5 291.5 H1104" fill="none" stroke="#c83030" stroke-width="1"/><polygon points="1105,289.0 1110.5,291.5 1105,294.0" fill="#e00000" stroke="#a00000" stroke-width="0.7"/><path d="M1157.5 184 V187.5 H1196.5 V371.5" fill="none" stroke="#c83030" stroke-width="1"/><path d="M1198.5 201 V204.5 H1196.5" fill="none" stroke="#c83030" stroke-width="1"/><path d="M1198.5 217 V220.5 H1196.5" fill="none" stroke="#c83030" stroke-width="1"/><path d="M1198.5 249 V252.5 H1196.5" fill="none" stroke="#c83030" stroke-width="1"/><path d="M1198.5 265 V268.5 H1196.5" fill="none" stroke="#c83030" stroke-width="1"/><path d="M1198.5 281 V284.5 H1196.5" fill="none" stroke="#c83030" stroke-width="1"/><path d="M1198.5 297 V300.5 H1196.5" fill="none" stroke="#c83030" stroke-width="1"/><path d="M1196.5 323.5 H1200" fill="none" stroke="#c83030" stroke-width="1"/><polygon points="1201,321.0 1206.5,323.5 1201,326.0" fill="#e00000" stroke="#a00000" stroke-width="0.7"/><path d="M1196.5 339.5 H1200" fill="none" stroke="#c83030" stroke-width="1"/><polygon points="1201,337.0 1206.5,339.5 1201,342.0" fill="#e00000" stroke="#a00000" stroke-width="0.7"/><path d="M1196.5 355.5 H1200" fill="none" stroke="#c83030" stroke-width="1"/><polygon points="1201,353.0 1206.5,355.5 1201,358.0" fill="#e00000" stroke="#a00000" stroke-width="0.7"/><path d="M1196.5 371.5 H1200" fill="none" stroke="#c83030" stroke-width="1"/><polygon points="1201,369.0 1206.5,371.5 1201,374.0" fill="#e00000" stroke="#a00000" stroke-width="0.7"/><path d="M1291.5 331.5 V398" fill="none" stroke="#c83030" stroke-width="1"/><path d="M1294.5 328.5 V332.0 H1291.5" fill="none" stroke="#c83030" stroke-width="1"/><path d="M1294.5 344.5 V348.0 H1291.5" fill="none" stroke="#c83030" stroke-width="1"/><path d="M1294.5 360.5 V364.0 H1291.5" fill="none" stroke="#c83030" stroke-width="1"/><path d="M1294.5 376.5 V380.0 H1291.5" fill="none" stroke="#c83030" stroke-width="1"/><rect x="1153.5" y="177.5" width="4" height="7" fill="#f00000" stroke="#7a0000" stroke-width="1"/><rect x="1112.0" y="193.5" width="86.5" height="7" fill="#f00000" stroke="#7a0000" stroke-width="1"/><rect x="1112.0" y="209.5" width="86.5" height="7" fill="#f00000" stroke="#7a0000" stroke-width="1"/><rect x="1112.0" y="241.5" width="86.5" height="7" fill="#f00000" stroke="#7a0000" stroke-width="1"/><rect x="1112.0" y="257.5" width="86.5" height="7" fill="#f00000" stroke="#7a0000" stroke-width="1"/><rect x="1112.0" y="273.5" width="86.5" height="7" fill="#f00000" stroke="#7a0000" stroke-width="1"/><rect x="1112.0" y="289.5" width="86.5" height="7" fill="#f00000" stroke="#7a0000" stroke-width="1"/><rect x="1207.5" y="320.5" width="86.5" height="7" fill="#f00000" stroke="#7a0000" stroke-width="1"/><rect x="1207.5" y="336.5" width="86.5" height="7" fill="#f00000" stroke="#7a0000" stroke-width="1"/><rect x="1207.5" y="352.5" width="86.5" height="7" fill="#f00000" stroke="#7a0000" stroke-width="1"/><rect x="1207.5" y="368.5" width="86.5" height="7" fill="#f00000" stroke="#7a0000" stroke-width="1"/><polygon points="1012.7,80.5 1016.5,76.7 1020.3,80.5 1016.5,84.3" fill="#000"/><polygon points="1108.7,96.8 1112.5,93.0 1116.3,96.8 1112.5,100.6" fill="#000"/><polygon points="1108.7,112.5 1112.5,108.7 1116.3,112.5 1112.5,116.3" fill="#000"/></svg>
<div class="t" style="left:1025px;top:74.19px;font-size:11px;line-height:13px;font-weight:400;color:#111111;letter-spacing:0px;transform:scaleX(0.8504);transform-origin:0 0;">Notice to Proceed, 01-Dec-2023 08:00 AM A</div>
<div class="t" style="left:1121px;top:90.19px;font-size:11px;line-height:13px;font-weight:400;color:#111111;letter-spacing:0px;transform:scaleX(0.8488);transform-origin:0 0;">Start Mobilization, 08-Dec-2023 08:00 AM A</div>
<div class="t" style="left:1121px;top:106.19px;font-size:11px;line-height:13px;font-weight:400;color:#111111;letter-spacing:0px;transform:scaleX(0.8475);transform-origin:0 0;">Start Construction Phase, 08-Dec-2023 08:00 AM A</div>
<div class="t" style="left:1207.5px;top:158.19px;font-size:11px;line-height:13px;font-weight:400;color:#111111;letter-spacing:0px;transform:scaleX(0.8283);transform-origin:0 0;">Mobilization</div>
<div class="t" style="left:1166px;top:174.19px;font-size:11px;line-height:13px;font-weight:400;color:#111111;letter-spacing:0px;transform:scaleX(0.835);transform-origin:0 0;">Mobilize - Grading Equipment</div>
<div class="t" style="left:1207.5px;top:190.19px;font-size:11px;line-height:13px;font-weight:400;color:#111111;letter-spacing:0px;transform:scaleX(0.834);transform-origin:0 0;">Mobilize - Excavation Equipment</div>
<div class="t" style="left:1207.5px;top:205.69px;font-size:11px;line-height:13px;font-weight:400;color:#111111;letter-spacing:0px;transform:scaleX(0.8366);transform-origin:0 0;">Mobilize - Piping &amp; Fittings Materials</div>
<div class="t" style="left:1207.5px;top:221.69px;font-size:11px;line-height:13px;font-weight:400;color:#111111;letter-spacing:0px;transform:scaleX(0.8372);transform-origin:0 0;">Surveying - Site Layout</div>
<div class="t" style="left:1207.5px;top:237.69px;font-size:11px;line-height:13px;font-weight:400;color:#111111;letter-spacing:0px;transform:scaleX(0.8421);transform-origin:0 0;">Surveying - SW</div>
<div class="t" style="left:1207.5px;top:253.69px;font-size:11px;line-height:13px;font-weight:400;color:#111111;letter-spacing:0px;transform:scaleX(0.8421);transform-origin:0 0;">Surveying - SE</div>
<div class="t" style="left:1207.5px;top:269.69px;font-size:11px;line-height:13px;font-weight:400;color:#111111;letter-spacing:0px;transform:scaleX(0.8421);transform-origin:0 0;">Surveying - NW</div>
<div class="t" style="left:1207.5px;top:285.69px;font-size:11px;line-height:13px;font-weight:400;color:#111111;letter-spacing:0px;transform:scaleX(0.8421);transform-origin:0 0;">Surveying - NE</div>
<div class="t" style="left:1303px;top:301.69px;font-size:11px;line-height:13px;font-weight:400;color:#111111;letter-spacing:0px;transform:scaleX(0.8307);transform-origin:0 0;">Grading</div>
<div class="t" style="left:1303px;top:317.69px;font-size:11px;line-height:13px;font-weight:400;color:#111111;letter-spacing:0px;transform:scaleX(0.845);transform-origin:0 0;">Grading - SW</div>
<div class="t" style="left:1303px;top:333.69px;font-size:11px;line-height:13px;font-weight:400;color:#111111;letter-spacing:0px;transform:scaleX(0.845);transform-origin:0 0;">Grading - SE</div>
<div class="t" style="left:1303px;top:349.69px;font-size:11px;line-height:13px;font-weight:400;color:#111111;letter-spacing:0px;transform:scaleX(0.845);transform-origin:0 0;">Grading - NW</div>
<div class="t" style="left:1303px;top:365.69px;font-size:11px;line-height:13px;font-weight:400;color:#111111;letter-spacing:0px;transform:scaleX(0.845);transform-origin:0 0;">Grading - NE</div></div></div>
<div class="a" style="left:997px;top:398px;width:427px;height:16px;background:#f0f0f0;"></div>
<svg class="a" style="left:1001px;top:403px" width="8" height="10"><path d="M6 1.5 L2.5 5 L6 8.5" fill="none" stroke="#505050" stroke-width="1.6"/></svg>
<div class="a" style="left:1013px;top:399px;width:15px;height:14px;background:#cdcdcd;"></div>
<div class="a" style="left:3px;top:414px;width:1421px;height:181px;background:#f0f0f0;"></div>
<div class="a" style="left:3px;top:414px;width:1421px;height:1px;background:#a0a0a0;"></div>
<div class="a" style="left:3px;top:418px;width:1421px;height:1px;background:#a0a0a0;"></div>
<div class="a" style="left:3px;top:419px;width:1421px;height:23px;background:#d9d9d9;"></div>
<div class="a" style="left:6px;top:442px;width:1418px;height:1px;background:#8c8c8c;"></div>
<div class="a" style="left:6px;top:442px;width:1px;height:153px;background:#a0a0a0;"></div>
<div class="a" style="left:6px;top:423px;width:44px;height:20px;background:#f0f0f0;border:1px solid #8c8c8c;border-bottom:1px solid #8c8c8c;box-sizing:border-box"></div>
<div class="t" style="left:-172.0px;width:400px;text-align:center;top:428.53px;font-size:10px;line-height:12px;font-weight:400;color:#333;letter-spacing:-0.3px;">General</div>
<div class="a" style="left:49px;top:423px;width:37px;height:21px;background:#f7f7f7;border:1px solid #8c8c8c;border-bottom:none;box-sizing:border-box"></div>
<div class="t" style="left:-132.5px;width:400px;text-align:center;top:428.53px;font-size:10px;line-height:12px;font-weight:400;color:#333;letter-spacing:-0.3px;">Status</div>
<div class="a" style="left:85px;top:423px;width:57px;height:20px;background:#f0f0f0;border:1px solid #8c8c8c;border-bottom:1px solid #8c8c8c;box-sizing:border-box"></div>
<div class="t" style="left:-86.5px;width:400px;text-align:center;top:428.53px;font-size:10px;line-height:12px;font-weight:400;color:#333;letter-spacing:-0.3px;">Resources</div>
<div class="a" style="left:141px;top:423px;width:70px;height:20px;background:#f0f0f0;border:1px solid #8c8c8c;border-bottom:1px solid #8c8c8c;box-sizing:border-box"></div>
<div class="t" style="left:-24.0px;width:400px;text-align:center;top:428.53px;font-size:10px;line-height:12px;font-weight:400;color:#333;letter-spacing:-0.3px;">Predecessors</div>
<div class="a" style="left:210px;top:423px;width:62px;height:20px;background:#f0f0f0;border:1px solid #8c8c8c;border-bottom:1px solid #8c8c8c;box-sizing:border-box"></div>
<div class="t" style="left:41.0px;width:400px;text-align:center;top:428.53px;font-size:10px;line-height:12px;font-weight:400;color:#333;letter-spacing:-0.3px;">Successors</div>
<div class="a" style="left:271px;top:423px;width:67px;height:20px;background:#f0f0f0;border:1px solid #8c8c8c;border-bottom:1px solid #8c8c8c;box-sizing:border-box"></div>
<div class="t" style="left:104.5px;width:400px;text-align:center;top:428.53px;font-size:10px;line-height:12px;font-weight:400;color:#333;letter-spacing:-0.3px;">Relationships</div>
<div class="a" style="left:26px;top:445px;width:52px;height:22px;background:#f0f0f0;border:1px solid #c0c0c0;box-sizing:border-box"></div>
<div class="a" style="left:27px;top:455px;width:50px;height:1px;background:#c8c8c8;"></div>
<svg class="a" style="left:47px;top:447px" width="10" height="18"><path d="M2 6 L5 2.5 L8 6 z" fill="#111"/><path d="M2 12 L5 15.5 L8 12 z" fill="#111"/></svg>
<div class="t" style="left:-197px;width:400px;text-align:right;top:450.03px;font-size:10px;line-height:12px;font-weight:400;color:#2a2a2a;letter-spacing:-0.3px;">Activity</div>
<div class="a" style="left:210px;top:447px;width:214px;height:18px;background:#fff;border-top:2px solid #7a7a7a;border-left:2px solid #7a7a7a;border-right:1px solid #e4e4e4;border-bottom:1px solid #e4e4e4;box-sizing:border-box"></div>
<div class="t" style="left:213px;top:450.33px;font-size:10px;line-height:12px;font-weight:400;color:#1a1a1a;letter-spacing:-0.3px;">PORT1040</div>
<div class="a" style="left:436px;top:447px;width:712px;height:18px;background:#fff;border-top:2px solid #7a7a7a;border-left:2px solid #7a7a7a;border-right:1px solid #e4e4e4;border-bottom:1px solid #e4e4e4;box-sizing:border-box"></div>
<div class="t" style="left:439px;top:450.33px;font-size:10px;line-height:12px;font-weight:400;color:#1a1a1a;letter-spacing:-0.3px;">Mobilize - Grading Equipment</div>
<div class="t" style="left:894px;width:400px;text-align:right;top:450.03px;font-size:10px;line-height:12px;font-weight:400;color:#2a2a2a;letter-spacing:-0.3px;">Project</div>
<div class="a" style="left:1304px;top:447px;width:130px;height:18px;background:#fff;border-top:2px solid #7a7a7a;border-left:2px solid #7a7a7a;border-right:1px solid #e4e4e4;border-bottom:1px solid #e4e4e4;box-sizing:border-box"></div>
<div class="t" style="left:1307px;top:450.33px;font-size:10px;line-height:12px;font-weight:400;color:#1a1a1a;letter-spacing:-0.55px;">PORTLAND-DD-18</div>
<div class="a" style="left:12px;top:471px;width:368px;height:129px;border:1px solid #c8c8c8;border-right-color:#a8a8a8;box-sizing:border-box;background:#f0f0f0"></div>
<div class="a" style="left:13px;top:472px;width:366px;height:18px;background:#ededed;"></div>
<div class="a" style="left:13px;top:490px;width:366px;height:1px;background:#b4b4b4;"></div>
<div class="a" style="left:13px;top:491px;width:366px;height:1px;background:#fafafa;"></div>
<div class="t" style="left:18px;top:475.53px;font-size:10px;line-height:12px;font-weight:400;color:#2a2a2a;letter-spacing:-0.3px;">Duration</div>
<div class="t" style="left:28px;top:497.53px;font-size:10px;line-height:12px;font-weight:400;color:#2a2a2a;letter-spacing:-0.3px;">Original</div>
<div class="t" style="left:28px;top:522.04px;font-size:10px;line-height:12px;font-weight:400;color:#2a2a2a;letter-spacing:-0.3px;">Actual</div>
<div class="t" style="left:28px;top:547.04px;font-size:10px;line-height:12px;font-weight:400;color:#2a2a2a;letter-spacing:-0.3px;">Remaining</div>
<div class="t" style="left:28px;top:572.04px;font-size:10px;line-height:12px;font-weight:400;color:#2a2a2a;letter-spacing:-0.3px;">At Complete</div>
<div class="a" style="left:210px;top:495px;width:146px;height:17px;background:#fff;border-top:2px solid #7a7a7a;border-left:2px solid #7a7a7a;border-right:1px solid #e4e4e4;border-bottom:1px solid #e4e4e4;box-sizing:border-box"></div>
<div class="t" style="left:-48px;width:400px;text-align:right;top:497.83px;font-size:10px;line-height:12px;font-weight:400;color:#1a1a1a;letter-spacing:-0.3px;">5.00d</div>
<div class="a" style="left:210px;top:520px;width:146px;height:17px;background:#f0f0f0;border-top:2px solid #7a7a7a;border-left:2px solid #7a7a7a;border-right:1px solid #e4e4e4;border-bottom:1px solid #e4e4e4;box-sizing:border-box"></div>
<div class="t" style="left:-48px;width:400px;text-align:right;top:522.84px;font-size:10px;line-height:12px;font-weight:400;color:#1a1a1a;letter-spacing:-0.3px;">0.00d</div>
<div class="a" style="left:210px;top:545px;width:146px;height:17px;background:#fff;border-top:2px solid #7a7a7a;border-left:2px solid #7a7a7a;border-right:1px solid #e4e4e4;border-bottom:1px solid #e4e4e4;box-sizing:border-box"></div>
<div class="t" style="left:-48px;width:400px;text-align:right;top:547.84px;font-size:10px;line-height:12px;font-weight:400;color:#1a1a1a;letter-spacing:-0.3px;">1.00d</div>
<div class="a" style="left:210px;top:570px;width:146px;height:17px;background:#fff;border-top:2px solid #7a7a7a;border-left:2px solid #7a7a7a;border-right:1px solid #e4e4e4;border-bottom:1px solid #e4e4e4;box-sizing:border-box"></div>
<div class="t" style="left:-48px;width:400px;text-align:right;top:572.84px;font-size:10px;line-height:12px;font-weight:400;color:#1a1a1a;letter-spacing:-0.3px;">1.00d</div>
<div class="a" style="left:385px;top:471px;width:837px;height:129px;border:1px solid #c8c8c8;border-right-color:#a8a8a8;border-bottom:none;box-sizing:border-box;background:#f0f0f0"></div>
<div class="a" style="left:386px;top:472px;width:835px;height:18px;background:#ededed;"></div>
<div class="a" style="left:386px;top:490px;width:835px;height:1px;background:#b4b4b4;"></div>
<div class="a" style="left:386px;top:491px;width:835px;height:1px;background:#fafafa;"></div>
<div class="t" style="left:401px;top:475.53px;font-size:10px;line-height:12px;font-weight:400;color:#2a2a2a;letter-spacing:-0.3px;">Status</div>
<div class="a" style="left:405px;top:498px;width:10px;height:10px;background:#fff;border-top:2px solid #808080;border-left:2px solid #808080;border-right:1px solid #e8e8e8;border-bottom:1px solid #e8e8e8;box-sizing:border-box"></div>
<div class="a" style="left:405px;top:523px;width:10px;height:10px;background:#fff;border-top:2px solid #808080;border-left:2px solid #808080;border-right:1px solid #e8e8e8;border-bottom:1px solid #e8e8e8;box-sizing:border-box"></div>
<svg class="a" style="left:405px;top:498px" width="10" height="10"><path d="M2.5 4.5 L4.5 7.5 L8.5 2.5" fill="none" stroke="#000" stroke-width="1.8"/></svg>
<div class="t" style="left:422px;top:497.53px;font-size:10px;line-height:12px;font-weight:400;color:#2a2a2a;letter-spacing:-0.3px;">Started</div>
<div class="t" style="left:422px;top:522.54px;font-size:10px;line-height:12px;font-weight:400;color:#2a2a2a;letter-spacing:-0.3px;">Finished</div>
<div class="t" style="left:405px;top:547.54px;font-size:10px;line-height:12px;font-weight:400;color:#2a2a2a;letter-spacing:-0.3px;">Exp Finish</div>
<div class="a" style="left:584px;top:495px;width:229px;height:17px;background:#fff;border-top:2px solid #7a7a7a;border-left:2px solid #7a7a7a;border-right:1px solid #e4e4e4;border-bottom:1px solid #e4e4e4;box-sizing:border-box"></div>
<div class="t" style="left:587px;top:497.83px;font-size:10px;line-height:12px;font-weight:400;color:#1a1a1a;letter-spacing:-0.3px;">11-Dec-2023 08:00 AM</div>
<div class="a" style="left:798px;top:497px;width:14px;height:15px;background:#f0f0f0;border-top:1px solid #fafafa;border-left:1px solid #fafafa;border-right:2px solid #6a6a6a;border-bottom:2px solid #6a6a6a;box-sizing:border-box"></div>
<div class="a" style="left:801.5px;top:507px;width:1.5px;height:2px;background:#6c6c6c;"></div>
<div class="a" style="left:804.5px;top:507px;width:1.5px;height:2px;background:#6c6c6c;"></div>
<div class="a" style="left:807.5px;top:507px;width:1.5px;height:2px;background:#6c6c6c;"></div>
<div class="a" style="left:584px;top:520px;width:229px;height:17px;background:#fff;border-top:2px solid #7a7a7a;border-left:2px solid #7a7a7a;border-right:1px solid #e4e4e4;border-bottom:1px solid #e4e4e4;box-sizing:border-box"></div>
<div class="t" style="left:587px;top:522.84px;font-size:10px;line-height:12px;font-weight:400;color:#1a1a1a;letter-spacing:-0.3px;">11-Dec-2023 04:00 PM</div>
<div class="a" style="left:798px;top:522px;width:14px;height:15px;background:#f0f0f0;border-top:1px solid #fafafa;border-left:1px solid #fafafa;border-right:2px solid #6a6a6a;border-bottom:2px solid #6a6a6a;box-sizing:border-box"></div>
<div class="a" style="left:801.5px;top:532px;width:1.5px;height:2px;background:#6c6c6c;"></div>
<div class="a" style="left:804.5px;top:532px;width:1.5px;height:2px;background:#6c6c6c;"></div>
<div class="a" style="left:807.5px;top:532px;width:1.5px;height:2px;background:#6c6c6c;"></div>
<div class="a" style="left:584px;top:545px;width:229px;height:17px;background:#fff;border-top:2px solid #7a7a7a;border-left:2px solid #7a7a7a;border-right:1px solid #e4e4e4;border-bottom:1px solid #e4e4e4;box-sizing:border-box"></div>
<div class="a" style="left:798px;top:547px;width:14px;height:15px;background:#f0f0f0;border-top:1px solid #fafafa;border-left:1px solid #fafafa;border-right:2px solid #6a6a6a;border-bottom:2px solid #6a6a6a;box-sizing:border-box"></div>
<div class="a" style="left:801.5px;top:557px;width:1.5px;height:2px;background:#6c6c6c;"></div>
<div class="a" style="left:804.5px;top:557px;width:1.5px;height:2px;background:#6c6c6c;"></div>
<div class="a" style="left:807.5px;top:557px;width:1.5px;height:2px;background:#6c6c6c;"></div>
<div class="t" style="left:824px;top:497.53px;font-size:10px;line-height:12px;font-weight:400;color:#2a2a2a;letter-spacing:-0.3px;">Duration %</div>
<div class="t" style="left:824px;top:522.54px;font-size:10px;line-height:12px;font-weight:400;color:#2a2a2a;letter-spacing:-0.3px;">Suspend</div>
<div class="t" style="left:824px;top:547.54px;font-size:10px;line-height:12px;font-weight:400;color:#2a2a2a;letter-spacing:-0.3px;">Resume</div>
<div class="a" style="left:987px;top:495px;width:220px;height:18px;background:#fff;border-top:2px solid #7a7a7a;border-left:2px solid #7a7a7a;border-right:1px solid #e4e4e4;border-bottom:1px solid #e4e4e4;box-sizing:border-box"></div>
<div class="t" style="left:990px;top:498.33px;font-size:10px;line-height:12px;font-weight:400;color:#1a1a1a;letter-spacing:-0.3px;">80%</div>
<div class="a" style="left:1009px;top:498px;width:1px;height:12px;background:#000;"></div>
<svg class="a" style="left:1037px;top:497px" width="9" height="17"><path d="M1.5 1 H7.5 M4.5 1 V15 M1.5 15 H7.5" fill="none" stroke="#222" stroke-width="1.2"/></svg>
<div class="a" style="left:987px;top:520px;width:220px;height:17px;background:#fff;border-top:2px solid #7a7a7a;border-left:2px solid #7a7a7a;border-right:1px solid #e4e4e4;border-bottom:1px solid #e4e4e4;box-sizing:border-box"></div>
<div class="a" style="left:1192px;top:522px;width:14px;height:15px;background:#f0f0f0;border-top:1px solid #fafafa;border-left:1px solid #fafafa;border-right:2px solid #6a6a6a;border-bottom:2px solid #6a6a6a;box-sizing:border-box"></div>
<div class="a" style="left:1195.5px;top:532px;width:1.5px;height:2px;background:#6c6c6c;"></div>
<div class="a" style="left:1198.5px;top:532px;width:1.5px;height:2px;background:#6c6c6c;"></div>
<div class="a" style="left:1201.5px;top:532px;width:1.5px;height:2px;background:#6c6c6c;"></div>
<div class="a" style="left:987px;top:545px;width:220px;height:17px;background:#f4f4f4;border-top:2px solid #7a7a7a;border-left:2px solid #7a7a7a;border-right:1px solid #e4e4e4;border-bottom:1px solid #e4e4e4;box-sizing:border-box"></div>
<div class="a" style="left:1192px;top:547px;width:14px;height:15px;background:#f0f0f0;border-top:1px solid #fafafa;border-left:1px solid #fafafa;border-right:2px solid #6a6a6a;border-bottom:2px solid #6a6a6a;box-sizing:border-box"></div>
<div class="a" style="left:1195.5px;top:557px;width:1.5px;height:2px;background:#6c6c6c;"></div>
<div class="a" style="left:1198.5px;top:557px;width:1.5px;height:2px;background:#6c6c6c;"></div>
<div class="a" style="left:1201.5px;top:557px;width:1.5px;height:2px;background:#6c6c6c;"></div>
<div class="a" style="left:385px;top:583px;width:837px;height:57px;border:1px solid #c8c8c8;border-right-color:#a8a8a8;box-sizing:border-box;background:#f0f0f0"></div>
<div class="a" style="left:386px;top:584px;width:835px;height:18px;background:#ededed;"></div>
<div class="a" style="left:386px;top:602px;width:835px;height:1px;background:#b4b4b4;"></div>
<div class="a" style="left:386px;top:603px;width:835px;height:1px;background:#fafafa;"></div>
<div class="t" style="left:401px;top:587.54px;font-size:10px;line-height:12px;font-weight:400;color:#2a2a2a;letter-spacing:-0.3px;">Constraints</div>
<div class="a" style="left:1228px;top:471px;width:212px;height:129px;border:1px solid #c8c8c8;border-right-color:#a8a8a8;box-sizing:border-box;background:#f0f0f0"></div>
<div class="a" style="left:1229px;top:472px;width:210px;height:15px;background:#ededed;"></div>
<div class="a" style="left:1229px;top:487px;width:210px;height:1px;background:#b4b4b4;"></div>
<div class="a" style="left:1229px;top:488px;width:210px;height:1px;background:#fafafa;"></div>
<svg class="a" style="left:1238px;top:477px" width="10" height="8"><path d="M1.5 1.5 L5 5.5 L8.5 1.5" fill="none" stroke="#606060" stroke-width="1"/></svg>
<div class="t" style="left:1250px;top:474.53px;font-size:10px;line-height:12px;font-weight:400;color:#2a2a2a;letter-spacing:-0.2px;">Labor Units</div>
<div class="t" style="left:1245px;top:497.53px;font-size:10px;line-height:12px;font-weight:400;color:#2a2a2a;letter-spacing:-0.3px;">Budgeted</div>
<div class="t" style="left:1245px;top:522.04px;font-size:10px;line-height:12px;font-weight:400;color:#2a2a2a;letter-spacing:-0.3px;">Actual</div>
<div class="t" style="left:1245px;top:547.04px;font-size:10px;line-height:12px;font-weight:400;color:#2a2a2a;letter-spacing:-0.3px;">Remaining</div>
<div class="t" style="left:1245px;top:572.04px;font-size:10px;line-height:12px;font-weight:400;color:#2a2a2a;letter-spacing:-0.3px;">At Complete</div>
<div class="a" style="left:11.5px;top:471px;width:364px;height:118px;border:3px solid #d04b4f;border-radius:13px;box-sizing:border-box;box-shadow:1px 2px 2px rgba(0,0,0,0.18)"></div>
<div class="a" style="left:385.5px;top:469.5px;width:840px;height:119.5px;border:3px solid #d04b4f;border-radius:15px;box-sizing:border-box;box-shadow:1px 2px 2px rgba(0,0,0,0.18)"></div>
<div class="a" style="left:0;top:0;width:1427px;height:3px;background:#000"></div>
<div class="a" style="left:0;top:0;width:3px;height:598px;background:#000"></div>
<div class="a" style="left:1424px;top:0;width:3px;height:598px;background:#000"></div>
<div class="a" style="left:0;top:595px;width:1427px;height:3px;background:#000"></div>
</div>
</body></html>
